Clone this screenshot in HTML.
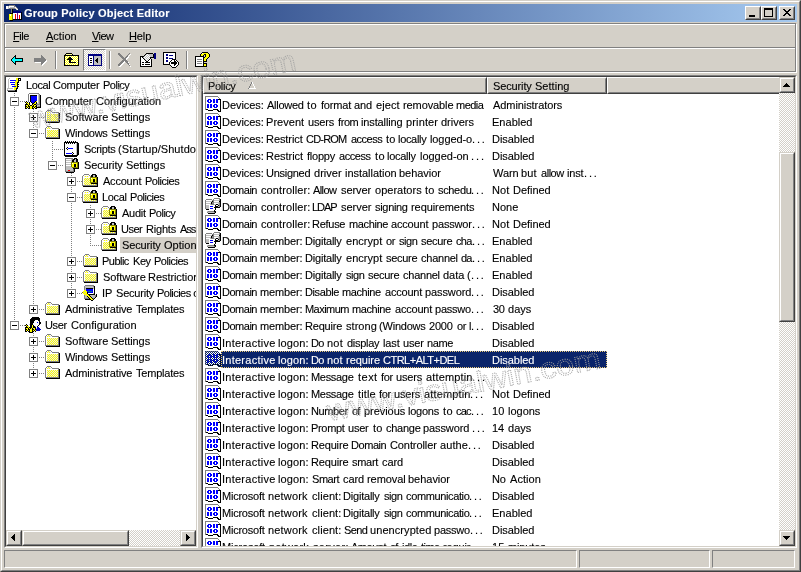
<!DOCTYPE html><html><head><meta charset="utf-8"><title>Group Policy Object Editor</title><style>
html,body{margin:0;padding:0;}
body{width:801px;height:572px;overflow:hidden;background:#d4d0c8;position:relative;
 font-family:"Liberation Sans",sans-serif;font-size:11px;color:#000;}
.a{position:absolute;}
.t{position:absolute;white-space:nowrap;line-height:13px;height:13px;will-change:transform;-webkit-text-stroke:0.12px currentColor;}
.sunk{position:absolute;box-sizing:border-box;border:1px solid;border-color:#808080 #fff #fff #808080;}
.sunk>.in{position:absolute;left:0;top:0;right:0;bottom:0;box-sizing:border-box;border:1px solid;border-color:#404040 #d4d0c8 #d4d0c8 #404040;background:#fff;overflow:hidden;}
.btn{position:absolute;box-sizing:border-box;background:#d4d0c8;border:1px solid;border-color:#fff #404040 #404040 #fff;}
.btn:before{content:"";position:absolute;left:0;top:0;right:0;bottom:0;border:1px solid;border-color:#d4d0c8 #808080 #808080 #d4d0c8;}
.sb{position:absolute;box-sizing:border-box;background:#d4d0c8;border:1px solid;border-color:#d4d0c8 #404040 #404040 #d4d0c8;}
.sb:before{content:"";position:absolute;left:0;top:0;right:0;bottom:0;border:1px solid;border-color:#fff #808080 #808080 #fff;}
.chk{position:absolute;background-color:#fff;background-image:
 linear-gradient(45deg,#d4d0c8 25%,transparent 25%,transparent 75%,#d4d0c8 75%),
 linear-gradient(45deg,#d4d0c8 25%,transparent 25%,transparent 75%,#d4d0c8 75%);
 background-size:2px 2px;background-position:0 0,1px 1px;}
.hdr{position:absolute;box-sizing:border-box;height:17px;background:#d4d0c8;border:1px solid;border-color:#fff #404040 #404040 #fff;}
.hdr:before{content:"";position:absolute;left:0;top:0;right:0;bottom:0;border:1px solid;border-color:#d4d0c8 #808080 #808080 #d4d0c8;}
.dotv{position:absolute;width:1px;background-image:linear-gradient(#808080 50%,transparent 50%);background-size:1px 2px;}
.doth{position:absolute;height:1px;background-image:linear-gradient(90deg,#808080 50%,transparent 50%);background-size:2px 1px;}
.pm{position:absolute;width:9px;height:9px;box-sizing:border-box;border:1px solid #808080;background:#fff;}
.pm i{position:absolute;left:1px;top:3px;width:5px;height:1px;background:#000;}
.pm b{position:absolute;left:3px;top:1px;width:1px;height:5px;background:#000;}
</style></head><body><svg width="0" height="0" style="position:absolute"><defs><symbol id="ic0" viewBox="0 0 16 16"><path fill="#808080" d="M0 0h13v1h-13zM0 1h1v1h-1zM13 1h1v1h-1zM0 2h1v1h-1zM14 2h1v1h-1zM0 3h1v1h-1zM0 4h1v1h-1zM0 5h1v1h-1zM0 6h1v1h-1zM0 7h1v1h-1zM0 8h1v1h-1zM0 9h1v1h-1zM0 10h1v1h-1zM0 11h1v1h-1zM0 12h1v1h-1zM0 13h1v1h-1z"/><path fill="#fff" d="M1 1h12v1h-12zM1 2h13v1h-13zM1 3h2v1h-2zM6 3h2v1h-2zM10 3h1v1h-1zM1 4h1v1h-1zM4 4h1v1h-1zM7 4h1v1h-1zM10 4h1v1h-1zM13 4h2v1h-2zM1 5h1v1h-1zM4 5h1v1h-1zM7 5h1v1h-1zM10 5h1v1h-1zM13 5h2v1h-2zM1 6h2v1h-2zM6 6h2v1h-2zM10 6h1v1h-1zM13 6h2v1h-2zM1 7h14v1h-14zM1 8h1v1h-1zM4 8h1v1h-1zM7 8h2v1h-2zM12 8h3v1h-3zM1 9h1v1h-1zM4 9h1v1h-1zM7 9h1v1h-1zM10 9h1v1h-1zM13 9h2v1h-2zM1 10h1v1h-1zM4 10h1v1h-1zM7 10h1v1h-1zM10 10h1v1h-1zM13 10h2v1h-2zM1 11h1v1h-1zM4 11h1v1h-1zM7 11h2v1h-2zM12 11h3v1h-3zM1 12h14v1h-14zM3 13h5v1h-5zM13 13h2v1h-2zM14 14h1v1h-1z"/><path fill="#0000ff" d="M3 3h3v1h-3zM8 3h2v1h-2zM11 3h2v1h-2zM2 4h2v1h-2zM5 4h2v1h-2zM8 4h2v1h-2zM11 4h2v1h-2zM2 5h2v1h-2zM5 5h2v1h-2zM8 5h2v1h-2zM11 5h2v1h-2zM3 6h3v1h-3zM8 6h2v1h-2zM11 6h2v1h-2zM2 8h2v1h-2zM5 8h2v1h-2zM9 8h3v1h-3zM2 9h2v1h-2zM5 9h2v1h-2zM8 9h2v1h-2zM11 9h2v1h-2zM2 10h2v1h-2zM5 10h2v1h-2zM8 10h2v1h-2zM11 10h2v1h-2zM2 11h2v1h-2zM5 11h2v1h-2zM9 11h3v1h-3z"/><path fill="#000" d="M13 3h3v1h-3zM15 4h1v1h-1zM15 5h1v1h-1zM15 6h1v1h-1zM15 7h1v1h-1zM15 8h1v1h-1zM15 9h1v1h-1zM15 10h1v1h-1zM15 11h1v1h-1zM15 12h1v1h-1zM1 13h2v1h-2zM8 13h5v1h-5zM15 13h1v1h-1zM3 14h5v1h-5zM12 14h2v1h-2zM15 14h1v1h-1zM13 15h3v1h-3z"/></symbol><symbol id="ic2" viewBox="0 0 16 16"><path fill="#0a246a" d="M0 0h1v1h-1zM2 0h1v1h-1zM4 0h1v1h-1zM6 0h1v1h-1zM8 0h1v1h-1zM10 0h1v1h-1zM12 0h1v1h-1zM1 1h1v1h-1zM3 1h1v1h-1zM5 1h1v1h-1zM7 1h1v1h-1zM9 1h1v1h-1zM11 1h1v1h-1zM13 1h1v1h-1zM0 2h1v1h-1zM2 2h1v1h-1zM4 2h1v1h-1zM6 2h1v1h-1zM8 2h1v1h-1zM10 2h1v1h-1zM12 2h1v1h-1zM14 2h1v1h-1zM1 3h1v1h-1zM3 3h1v1h-1zM5 3h1v1h-1zM7 3h1v1h-1zM9 3h1v1h-1zM11 3h1v1h-1zM13 3h1v1h-1zM15 3h1v1h-1zM0 4h1v1h-1zM2 4h1v1h-1zM4 4h1v1h-1zM6 4h1v1h-1zM8 4h1v1h-1zM10 4h1v1h-1zM12 4h1v1h-1zM14 4h1v1h-1zM1 5h1v1h-1zM3 5h1v1h-1zM5 5h1v1h-1zM7 5h1v1h-1zM9 5h1v1h-1zM11 5h1v1h-1zM13 5h1v1h-1zM15 5h1v1h-1zM0 6h1v1h-1zM2 6h1v1h-1zM4 6h1v1h-1zM6 6h1v1h-1zM8 6h1v1h-1zM10 6h1v1h-1zM12 6h1v1h-1zM14 6h1v1h-1zM1 7h1v1h-1zM3 7h1v1h-1zM5 7h1v1h-1zM7 7h1v1h-1zM9 7h1v1h-1zM11 7h1v1h-1zM13 7h1v1h-1zM15 7h1v1h-1zM0 8h1v1h-1zM2 8h1v1h-1zM4 8h1v1h-1zM6 8h1v1h-1zM8 8h1v1h-1zM10 8h1v1h-1zM12 8h1v1h-1zM14 8h1v1h-1zM1 9h1v1h-1zM3 9h1v1h-1zM5 9h1v1h-1zM7 9h1v1h-1zM9 9h1v1h-1zM11 9h1v1h-1zM13 9h1v1h-1zM15 9h1v1h-1zM0 10h1v1h-1zM2 10h1v1h-1zM4 10h1v1h-1zM6 10h1v1h-1zM8 10h1v1h-1zM10 10h1v1h-1zM12 10h1v1h-1zM14 10h1v1h-1zM1 11h1v1h-1zM3 11h1v1h-1zM5 11h1v1h-1zM7 11h1v1h-1zM9 11h1v1h-1zM11 11h1v1h-1zM13 11h1v1h-1zM15 11h1v1h-1zM0 12h1v1h-1zM2 12h1v1h-1zM4 12h1v1h-1zM6 12h1v1h-1zM8 12h1v1h-1zM10 12h1v1h-1zM12 12h1v1h-1zM14 12h1v1h-1zM1 13h1v1h-1zM3 13h1v1h-1zM5 13h1v1h-1zM7 13h1v1h-1zM9 13h1v1h-1zM11 13h1v1h-1zM13 13h1v1h-1zM15 13h1v1h-1zM4 14h1v1h-1zM6 14h1v1h-1zM12 14h1v1h-1zM14 14h1v1h-1zM13 15h1v1h-1zM15 15h1v1h-1z"/><path fill="#808080" d="M1 0h1v1h-1zM3 0h1v1h-1zM5 0h1v1h-1zM7 0h1v1h-1zM9 0h1v1h-1zM11 0h1v1h-1zM0 1h1v1h-1zM0 3h1v1h-1zM0 5h1v1h-1zM0 7h1v1h-1zM0 9h1v1h-1zM0 11h1v1h-1zM0 13h1v1h-1z"/><path fill="#fff" d="M2 1h1v1h-1zM4 1h1v1h-1zM6 1h1v1h-1zM8 1h1v1h-1zM10 1h1v1h-1zM12 1h1v1h-1zM1 2h1v1h-1zM3 2h1v1h-1zM5 2h1v1h-1zM7 2h1v1h-1zM9 2h1v1h-1zM11 2h1v1h-1zM13 2h1v1h-1zM2 3h1v1h-1zM6 3h1v1h-1zM10 3h1v1h-1zM1 4h1v1h-1zM7 4h1v1h-1zM13 4h1v1h-1zM4 5h1v1h-1zM10 5h1v1h-1zM14 5h1v1h-1zM1 6h1v1h-1zM7 6h1v1h-1zM13 6h1v1h-1zM2 7h1v1h-1zM4 7h1v1h-1zM6 7h1v1h-1zM8 7h1v1h-1zM10 7h1v1h-1zM12 7h1v1h-1zM14 7h1v1h-1zM1 8h1v1h-1zM7 8h1v1h-1zM13 8h1v1h-1zM4 9h1v1h-1zM10 9h1v1h-1zM14 9h1v1h-1zM1 10h1v1h-1zM7 10h1v1h-1zM13 10h1v1h-1zM4 11h1v1h-1zM8 11h1v1h-1zM12 11h1v1h-1zM14 11h1v1h-1zM1 12h1v1h-1zM3 12h1v1h-1zM5 12h1v1h-1zM7 12h1v1h-1zM9 12h1v1h-1zM11 12h1v1h-1zM13 12h1v1h-1zM4 13h1v1h-1zM6 13h1v1h-1zM14 13h1v1h-1z"/><path fill="#0000ff" d="M4 3h1v1h-1zM8 3h1v1h-1zM12 3h1v1h-1zM3 4h1v1h-1zM5 4h1v1h-1zM9 4h1v1h-1zM11 4h1v1h-1zM2 5h1v1h-1zM6 5h1v1h-1zM8 5h1v1h-1zM12 5h1v1h-1zM3 6h1v1h-1zM5 6h1v1h-1zM9 6h1v1h-1zM11 6h1v1h-1zM3 8h1v1h-1zM5 8h1v1h-1zM9 8h1v1h-1zM11 8h1v1h-1zM2 9h1v1h-1zM6 9h1v1h-1zM8 9h1v1h-1zM12 9h1v1h-1zM3 10h1v1h-1zM5 10h1v1h-1zM9 10h1v1h-1zM11 10h1v1h-1zM2 11h1v1h-1zM6 11h1v1h-1zM10 11h1v1h-1z"/><path fill="#000" d="M14 3h1v1h-1zM15 4h1v1h-1zM15 6h1v1h-1zM15 8h1v1h-1zM15 10h1v1h-1zM15 12h1v1h-1zM2 13h1v1h-1zM8 13h1v1h-1zM10 13h1v1h-1zM12 13h1v1h-1zM3 14h1v1h-1zM5 14h1v1h-1zM7 14h1v1h-1zM13 14h1v1h-1zM15 14h1v1h-1zM14 15h1v1h-1z"/></symbol><symbol id="ic1" viewBox="0 0 16 16"><path fill="#808080" d="M9 0h6v1h-6zM1 1h6v1h-6zM8 1h1v1h-1zM14 1h1v1h-1zM0 2h1v1h-1zM7 2h2v1h-2zM14 2h1v1h-1zM0 3h1v1h-1zM8 3h1v1h-1zM0 4h1v1h-1zM7 4h2v1h-2zM14 4h1v1h-1zM0 5h1v1h-1zM7 5h2v1h-2zM14 5h1v1h-1zM0 6h1v1h-1zM6 6h3v1h-3zM14 6h1v1h-1zM0 7h1v1h-1zM14 7h1v1h-1zM0 8h1v1h-1zM14 8h1v1h-1zM0 9h1v1h-1zM0 10h1v1h-1zM3 13h6v1h-6zM2 14h1v1h-1zM9 14h1v1h-1z"/><path fill="#fff" d="M9 1h5v1h-5zM1 2h6v1h-6zM9 3h5v1h-5zM1 4h5v1h-5zM9 5h4v1h-4zM1 6h4v1h-4zM4 7h6v1h-6zM11 7h2v1h-2zM4 8h1v1h-1zM8 8h2v1h-2zM4 9h5v1h-5zM4 10h1v1h-1zM8 10h2v1h-2zM4 11h6v1h-6zM4 12h5v1h-5z"/><path fill="#000" d="M15 1h1v1h-1zM15 2h1v1h-1zM7 3h1v1h-1zM14 3h2v1h-2zM6 4h1v1h-1zM15 4h1v1h-1zM6 5h1v1h-1zM15 5h1v1h-1zM11 6h2v1h-2zM15 6h1v1h-1zM10 7h1v1h-1zM13 7h1v1h-1zM15 7h1v1h-1zM10 8h3v1h-3zM15 8h1v1h-1zM9 9h6v1h-6zM10 10h1v1h-1zM1 11h3v1h-3zM10 11h1v1h-1zM9 12h1v1h-1zM9 13h2v1h-2zM10 14h1v1h-1zM3 15h7v1h-7z"/><path fill="#c0c0c0" d="M9 2h5v1h-5zM1 3h6v1h-6zM9 4h5v1h-5zM1 5h5v1h-5zM13 5h1v1h-1zM5 6h1v1h-1zM9 6h2v1h-2zM13 6h1v1h-1zM1 7h3v1h-3zM1 8h3v1h-3zM13 8h1v1h-1zM1 9h3v1h-3zM1 10h3v1h-3zM2 13h1v1h-1zM3 14h6v1h-6z"/><path fill="#0000ff" d="M5 8h3v1h-3zM5 10h3v1h-3z"/></symbol><symbol id="folder" viewBox="0 0 16 16"><path fill="#808080" d="M3 1h4v1h-4zM2 2h1v1h-1zM7 2h1v1h-1zM1 3h1v1h-1zM8 3h7v1h-7zM1 4h1v1h-1zM14 4h1v1h-1zM1 5h1v1h-1zM14 5h1v1h-1zM1 6h1v1h-1zM14 6h1v1h-1zM1 7h1v1h-1zM14 7h1v1h-1zM1 8h1v1h-1zM14 8h1v1h-1zM1 9h1v1h-1zM14 9h1v1h-1zM1 10h1v1h-1zM14 10h1v1h-1zM1 11h1v1h-1zM14 11h1v1h-1zM1 12h14v1h-14z"/><path fill="#fff" d="M3 2h1v1h-1zM6 2h1v1h-1zM2 3h1v1h-1zM7 3h1v1h-1zM2 4h12v1h-12zM2 5h1v1h-1zM2 6h1v1h-1zM2 7h1v1h-1zM2 8h1v1h-1zM2 9h1v1h-1zM2 10h1v1h-1zM2 11h1v1h-1z"/><path fill="#ffff00" d="M4 2h1v1h-1zM3 3h1v1h-1zM5 3h1v1h-1zM3 5h1v1h-1zM5 5h1v1h-1zM7 5h1v1h-1zM9 5h1v1h-1zM11 5h1v1h-1zM13 5h1v1h-1zM4 6h1v1h-1zM6 6h1v1h-1zM8 6h1v1h-1zM10 6h1v1h-1zM12 6h1v1h-1zM3 7h1v1h-1zM5 7h1v1h-1zM7 7h1v1h-1zM9 7h1v1h-1zM11 7h1v1h-1zM13 7h1v1h-1zM4 8h1v1h-1zM6 8h1v1h-1zM8 8h1v1h-1zM10 8h1v1h-1zM12 8h1v1h-1zM3 9h1v1h-1zM5 9h1v1h-1zM7 9h1v1h-1zM9 9h1v1h-1zM11 9h1v1h-1zM13 9h1v1h-1zM4 10h1v1h-1zM6 10h1v1h-1zM8 10h1v1h-1zM10 10h1v1h-1zM12 10h1v1h-1zM3 11h1v1h-1zM5 11h1v1h-1zM7 11h1v1h-1zM9 11h1v1h-1zM11 11h1v1h-1zM13 11h1v1h-1z"/><path fill="#e8e8e8" d="M5 2h1v1h-1zM4 3h1v1h-1zM6 3h1v1h-1zM4 5h1v1h-1zM6 5h1v1h-1zM8 5h1v1h-1zM10 5h1v1h-1zM12 5h1v1h-1zM3 6h1v1h-1zM5 6h1v1h-1zM7 6h1v1h-1zM9 6h1v1h-1zM11 6h1v1h-1zM13 6h1v1h-1zM4 7h1v1h-1zM6 7h1v1h-1zM8 7h1v1h-1zM10 7h1v1h-1zM12 7h1v1h-1zM3 8h1v1h-1zM5 8h1v1h-1zM7 8h1v1h-1zM9 8h1v1h-1zM11 8h1v1h-1zM13 8h1v1h-1zM4 9h1v1h-1zM6 9h1v1h-1zM8 9h1v1h-1zM10 9h1v1h-1zM12 9h1v1h-1zM3 10h1v1h-1zM5 10h1v1h-1zM7 10h1v1h-1zM9 10h1v1h-1zM11 10h1v1h-1zM13 10h1v1h-1zM4 11h1v1h-1zM6 11h1v1h-1zM8 11h1v1h-1zM10 11h1v1h-1zM12 11h1v1h-1z"/><path fill="#000" d="M15 4h1v1h-1zM15 5h1v1h-1zM15 6h1v1h-1zM15 7h1v1h-1zM15 8h1v1h-1zM15 9h1v1h-1zM15 10h1v1h-1zM15 11h1v1h-1zM15 12h1v1h-1zM2 13h14v1h-14z"/></symbol><symbol id="lockf" viewBox="0 0 16 16"><path fill="#808080" d="M2 1h5v1h-5zM1 2h1v1h-1zM7 2h1v1h-1zM0 3h1v1h-1zM8 3h1v1h-1zM0 4h1v1h-1zM0 5h1v1h-1zM0 6h1v1h-1zM0 7h1v1h-1zM0 8h1v1h-1zM0 9h1v1h-1zM0 10h1v1h-1zM0 11h1v1h-1zM14 11h1v1h-1zM0 12h15v1h-15z"/><path fill="#000" d="M10 1h4v1h-4zM9 2h2v1h-2zM13 2h2v1h-2zM9 3h2v1h-2zM13 3h2v1h-2zM15 4h1v1h-1zM15 5h1v1h-1zM11 6h2v1h-2zM15 6h1v1h-1zM11 7h2v1h-2zM15 7h1v1h-1zM11 8h2v1h-2zM15 8h1v1h-1zM15 9h1v1h-1zM9 10h7v1h-7zM15 11h1v1h-1zM15 12h1v1h-1zM1 13h15v1h-15z"/><path fill="#fff" d="M2 2h5v1h-5zM1 3h1v1h-1zM7 3h1v1h-1zM1 4h7v1h-7zM1 5h1v1h-1zM9 5h1v1h-1zM1 6h1v1h-1zM1 7h1v1h-1zM1 8h1v1h-1zM1 9h1v1h-1zM1 10h1v1h-1zM1 11h1v1h-1z"/><path fill="#c0c0c0" d="M11 2h2v1h-2zM11 3h2v1h-2z"/><path fill="#e8e8e8" d="M2 3h1v1h-1zM4 3h1v1h-1zM6 3h1v1h-1zM2 5h1v1h-1zM4 5h1v1h-1zM6 5h1v1h-1zM3 6h1v1h-1zM5 6h1v1h-1zM7 6h1v1h-1zM2 7h1v1h-1zM4 7h1v1h-1zM6 7h1v1h-1zM3 8h1v1h-1zM5 8h1v1h-1zM7 8h1v1h-1zM2 9h1v1h-1zM4 9h1v1h-1zM6 9h1v1h-1zM3 10h1v1h-1zM5 10h1v1h-1zM7 10h1v1h-1zM2 11h1v1h-1zM4 11h1v1h-1zM6 11h1v1h-1zM8 11h1v1h-1zM10 11h1v1h-1zM12 11h1v1h-1z"/><path fill="#ffff00" d="M3 3h1v1h-1zM5 3h1v1h-1zM3 5h1v1h-1zM5 5h1v1h-1zM7 5h1v1h-1zM10 5h4v1h-4zM2 6h1v1h-1zM4 6h1v1h-1zM6 6h1v1h-1zM9 6h2v1h-2zM13 6h1v1h-1zM3 7h1v1h-1zM5 7h1v1h-1zM7 7h1v1h-1zM9 7h2v1h-2zM13 7h1v1h-1zM2 8h1v1h-1zM4 8h1v1h-1zM6 8h1v1h-1zM9 8h2v1h-2zM13 8h1v1h-1zM3 9h1v1h-1zM5 9h1v1h-1zM7 9h1v1h-1zM2 10h1v1h-1zM4 10h1v1h-1zM6 10h1v1h-1zM8 10h1v1h-1zM3 11h1v1h-1zM5 11h1v1h-1zM7 11h1v1h-1zM9 11h1v1h-1zM11 11h1v1h-1zM13 11h1v1h-1z"/><path fill="#808000" d="M8 4h7v1h-7zM8 5h1v1h-1zM14 5h1v1h-1zM8 6h1v1h-1zM14 6h1v1h-1zM8 7h1v1h-1zM14 7h1v1h-1zM8 8h1v1h-1zM14 8h1v1h-1zM8 9h7v1h-7z"/></symbol><symbol id="scroll" viewBox="0 0 16 16"><path fill="#c0c0c0" d="M3 1h1v1h-1zM2 2h1v1h-1zM2 3h1v1h-1zM2 4h1v1h-1zM2 5h1v1h-1zM2 6h1v1h-1zM2 7h1v1h-1zM2 8h1v1h-1zM2 9h1v1h-1zM2 10h1v1h-1zM1 11h6v1h-6zM1 12h1v1h-1z"/><path fill="#fff" d="M4 1h6v1h-6zM3 2h7v1h-7zM13 2h1v1h-1zM3 3h1v1h-1zM3 4h6v1h-6zM3 5h1v1h-1zM3 6h6v1h-6zM3 7h2v1h-2zM3 8h5v1h-5zM3 9h3v1h-3zM3 10h5v1h-5zM7 11h1v1h-1zM2 12h6v1h-6z"/><path fill="#ffff00" d="M10 1h2v1h-2zM10 2h2v1h-2zM10 3h2v1h-2zM9 4h3v1h-3zM9 5h2v1h-2zM9 6h2v1h-2zM9 7h2v1h-2zM8 8h3v1h-3zM10 9h1v1h-1zM8 10h3v1h-3zM8 11h2v1h-2zM8 12h2v1h-2z"/><path fill="#000" d="M12 1h3v1h-3zM12 2h1v1h-1zM14 2h1v1h-1zM12 3h3v1h-3zM12 4h1v1h-1zM11 5h2v1h-2zM11 6h1v1h-1zM11 7h2v1h-2zM11 8h1v1h-1zM11 9h2v1h-2zM11 10h1v1h-1zM10 11h2v1h-2zM10 12h1v1h-1zM9 13h2v1h-2zM2 14h9v1h-9z"/><path fill="#0000ff" d="M4 3h6v1h-6zM4 5h5v1h-5zM5 7h4v1h-4zM6 9h4v1h-4z"/><path fill="#808080" d="M1 13h8v1h-8z"/></symbol><symbol id="comp" viewBox="0 0 16 16"><path fill="#808080" d="M4 0h10v1h-10zM3 1h1v1h-1zM14 1h1v1h-1zM3 2h1v1h-1zM14 2h1v1h-1zM3 3h1v1h-1zM14 3h1v1h-1zM3 4h1v1h-1zM14 4h1v1h-1zM3 5h1v1h-1zM14 5h1v1h-1zM3 6h1v1h-1zM14 6h1v1h-1zM3 7h1v1h-1zM14 7h1v1h-1zM3 8h1v1h-1zM14 8h1v1h-1zM14 9h1v1h-1zM14 10h1v1h-1zM11 11h4v1h-4zM13 13h2v1h-2z"/><path fill="#fff" d="M4 1h9v1h-9zM4 2h1v1h-1zM12 2h1v1h-1zM4 3h1v1h-1zM12 3h1v1h-1zM4 4h1v1h-1zM12 4h1v1h-1zM4 5h1v1h-1zM12 5h1v1h-1zM4 6h1v1h-1zM12 6h1v1h-1zM4 7h1v1h-1zM12 7h1v1h-1zM4 8h1v1h-1zM12 8h1v1h-1zM5 9h1v1h-1zM12 9h1v1h-1zM5 10h2v1h-2zM5 11h2v1h-2z"/><path fill="#c0c0c0" d="M13 1h1v1h-1zM13 2h1v1h-1zM13 3h1v1h-1zM13 4h1v1h-1zM13 5h1v1h-1zM13 6h1v1h-1zM13 7h1v1h-1zM13 8h1v1h-1zM13 9h1v1h-1zM12 10h2v1h-2zM12 12h3v1h-3zM12 13h1v1h-1z"/><path fill="#000" d="M5 2h7v1h-7zM15 2h1v1h-1zM5 3h1v1h-1zM15 3h1v1h-1zM5 4h1v1h-1zM15 4h1v1h-1zM5 5h1v1h-1zM15 5h1v1h-1zM5 6h1v1h-1zM15 6h1v1h-1zM5 7h1v1h-1zM15 7h1v1h-1zM1 8h1v1h-1zM5 8h1v1h-1zM10 8h1v1h-1zM15 8h1v1h-1zM0 9h1v1h-1zM2 9h1v1h-1zM4 9h1v1h-1zM6 9h1v1h-1zM9 9h1v1h-1zM11 9h1v1h-1zM15 9h1v1h-1zM1 10h1v1h-1zM4 10h1v1h-1zM7 10h2v1h-2zM11 10h1v1h-1zM15 10h1v1h-1zM0 11h3v1h-3zM4 11h1v1h-1zM7 11h1v1h-1zM9 11h2v1h-2zM15 11h1v1h-1zM0 12h1v1h-1zM3 12h1v1h-1zM5 12h2v1h-2zM8 12h1v1h-1zM11 12h1v1h-1zM15 12h1v1h-1zM0 13h2v1h-2zM3 13h2v1h-2zM7 13h2v1h-2zM10 13h2v1h-2zM15 13h1v1h-1zM0 14h1v1h-1zM2 14h1v1h-1zM4 14h1v1h-1zM7 14h1v1h-1zM9 14h1v1h-1zM11 14h5v1h-5zM0 15h2v1h-2zM3 15h2v1h-2zM7 15h2v1h-2zM10 15h2v1h-2z"/><path fill="#0000ff" d="M6 3h6v1h-6zM6 4h6v1h-6zM6 5h6v1h-6zM6 6h6v1h-6zM6 7h6v1h-6zM6 8h4v1h-4zM7 9h2v1h-2z"/><path fill="#ffff00" d="M11 8h1v1h-1zM1 9h1v1h-1zM10 9h1v1h-1zM2 10h2v1h-2zM9 10h2v1h-2zM3 11h1v1h-1zM8 11h1v1h-1zM1 12h2v1h-2zM4 12h1v1h-1zM7 12h1v1h-1zM9 12h2v1h-2zM2 13h1v1h-1zM5 13h2v1h-2zM9 13h1v1h-1zM1 14h1v1h-1zM3 14h1v1h-1zM5 14h2v1h-2zM8 14h1v1h-1zM10 14h1v1h-1zM5 15h2v1h-2z"/></symbol><symbol id="user" viewBox="0 0 16 16"><path fill="#000" d="M7 0h7v1h-7zM6 1h9v1h-9zM5 2h10v1h-10zM5 3h5v1h-5zM13 3h2v1h-2zM5 4h4v1h-4zM14 4h1v1h-1zM5 5h4v1h-4zM14 5h2v1h-2zM5 6h3v1h-3zM14 6h2v1h-2zM1 7h1v1h-1zM5 7h3v1h-3zM14 7h1v1h-1zM0 8h1v1h-1zM2 8h1v1h-1zM5 8h2v1h-2zM8 8h1v1h-1zM13 8h1v1h-1zM1 9h1v1h-1zM5 9h2v1h-2zM8 9h2v1h-2zM12 9h1v1h-1zM0 10h3v1h-3zM4 10h3v1h-3zM8 10h3v1h-3zM0 11h1v1h-1zM3 11h1v1h-1zM5 11h1v1h-1zM7 11h1v1h-1zM10 11h1v1h-1zM0 12h2v1h-2zM3 12h2v1h-2zM7 12h2v1h-2zM10 12h1v1h-1zM0 13h1v1h-1zM2 13h1v1h-1zM4 13h1v1h-1zM7 13h1v1h-1zM9 13h1v1h-1zM0 14h2v1h-2zM3 14h2v1h-2zM7 14h2v1h-2zM10 14h1v1h-1zM4 15h4v1h-4z"/><path fill="#fff" d="M10 3h3v1h-3zM9 4h5v1h-5zM9 5h3v1h-3zM13 5h1v1h-1zM8 6h6v1h-6zM8 7h6v1h-6zM4 8h1v1h-1zM9 8h4v1h-4zM4 9h1v1h-1zM11 9h1v1h-1zM11 10h1v1h-1z"/><path fill="#0000ff" d="M12 5h1v1h-1z"/><path fill="#c0c0c0" d="M4 7h1v1h-1zM10 9h1v1h-1zM11 11h1v1h-1z"/><path fill="#ffff00" d="M1 8h1v1h-1zM7 8h1v1h-1zM2 9h2v1h-2zM7 9h1v1h-1zM3 10h1v1h-1zM7 10h1v1h-1zM1 11h2v1h-2zM4 11h1v1h-1zM6 11h1v1h-1zM8 11h2v1h-2zM2 12h1v1h-1zM5 12h2v1h-2zM9 12h1v1h-1zM1 13h1v1h-1zM3 13h1v1h-1zM5 13h2v1h-2zM8 13h1v1h-1zM10 13h1v1h-1zM5 14h2v1h-2z"/><path fill="#0000c0" d="M12 10h2v1h-2zM12 11h3v1h-3zM11 12h5v1h-5zM11 13h4v1h-4z"/></symbol><symbol id="script" viewBox="0 0 16 16"><path fill="#000" d="M2 0h1v1h-1zM4 0h1v1h-1zM6 0h1v1h-1zM8 0h1v1h-1zM10 0h1v1h-1zM12 0h1v1h-1zM1 1h14v1h-14zM1 2h1v1h-1zM3 2h1v1h-1zM5 2h1v1h-1zM7 2h1v1h-1zM9 2h1v1h-1zM11 2h1v1h-1zM14 2h2v1h-2zM1 3h1v1h-1zM14 3h2v1h-2zM1 4h1v1h-1zM14 4h2v1h-2zM1 5h1v1h-1zM14 5h2v1h-2zM1 6h1v1h-1zM4 6h1v1h-1zM14 6h2v1h-2zM1 7h1v1h-1zM3 7h1v1h-1zM14 7h2v1h-2zM1 8h1v1h-1zM4 8h1v1h-1zM14 8h2v1h-2zM1 9h1v1h-1zM14 9h2v1h-2zM1 10h1v1h-1zM14 10h2v1h-2zM1 11h1v1h-1zM9 11h1v1h-1zM14 11h2v1h-2zM1 12h1v1h-1zM10 12h1v1h-1zM14 12h2v1h-2zM1 13h1v1h-1zM9 13h1v1h-1zM14 13h2v1h-2zM1 14h14v1h-14zM2 15h12v1h-12z"/><path fill="#fff" d="M2 2h1v1h-1zM4 2h1v1h-1zM6 2h1v1h-1zM8 2h1v1h-1zM10 2h1v1h-1zM12 2h1v1h-1zM2 3h11v1h-11zM2 4h11v1h-11zM2 5h11v1h-11zM2 6h2v1h-2zM5 6h8v1h-8zM2 7h1v1h-1zM4 7h1v1h-1zM10 7h3v1h-3zM2 8h2v1h-2zM5 8h8v1h-8zM2 9h11v1h-11zM2 10h11v1h-11zM2 11h7v1h-7zM10 11h3v1h-3zM2 12h1v1h-1zM9 12h1v1h-1zM11 12h2v1h-2zM2 13h7v1h-7zM10 13h3v1h-3z"/><path fill="#c0c0c0" d="M13 2h1v1h-1zM13 3h1v1h-1zM13 4h1v1h-1zM13 5h1v1h-1zM13 6h1v1h-1zM13 7h1v1h-1zM13 8h1v1h-1zM13 9h1v1h-1zM13 10h1v1h-1zM13 11h1v1h-1zM13 12h1v1h-1zM13 13h1v1h-1z"/><path fill="#0000ff" d="M5 7h5v1h-5zM3 12h6v1h-6z"/></symbol><symbol id="secsrv" viewBox="0 0 16 16"><path fill="#808080" d="M2 1h8v1h-8zM2 2h1v1h-1zM9 2h1v1h-1zM2 3h1v1h-1zM2 4h1v1h-1zM2 5h1v1h-1zM2 6h1v1h-1zM2 7h1v1h-1zM2 8h1v1h-1zM2 9h1v1h-1zM2 10h1v1h-1zM2 11h1v1h-1zM2 12h1v1h-1zM10 12h1v1h-1zM2 13h1v1h-1zM10 13h1v1h-1zM2 14h9v1h-9z"/><path fill="#000" d="M11 1h3v1h-3zM10 2h2v1h-2zM13 2h2v1h-2zM9 3h2v1h-2zM13 3h2v1h-2zM9 4h2v1h-2zM13 4h2v1h-2zM15 5h1v1h-1zM15 6h1v1h-1zM11 7h2v1h-2zM15 7h1v1h-1zM11 8h2v1h-2zM15 8h1v1h-1zM11 9h2v1h-2zM15 9h1v1h-1zM15 10h1v1h-1zM10 11h6v1h-6zM11 12h1v1h-1zM11 13h1v1h-1zM11 14h1v1h-1zM3 15h8v1h-8z"/><path fill="#fff" d="M3 2h5v1h-5zM3 4h5v1h-5zM3 6h5v1h-5zM9 6h1v1h-1zM3 8h5v1h-5z"/><path fill="#c0c0c0" d="M8 2h1v1h-1zM12 2h1v1h-1zM3 3h6v1h-6zM11 3h2v1h-2zM8 4h1v1h-1zM11 4h2v1h-2zM3 5h5v1h-5zM3 7h5v1h-5zM3 9h5v1h-5zM3 10h6v1h-6zM3 11h7v1h-7zM3 12h7v1h-7zM3 13h2v1h-2zM7 13h3v1h-3z"/><path fill="#808000" d="M8 5h7v1h-7zM8 6h1v1h-1zM14 6h1v1h-1zM8 7h1v1h-1zM14 7h1v1h-1zM8 8h1v1h-1zM14 8h1v1h-1zM8 9h1v1h-1zM14 9h1v1h-1zM9 10h6v1h-6z"/><path fill="#ffff00" d="M10 6h4v1h-4zM9 7h2v1h-2zM13 7h1v1h-1zM9 8h2v1h-2zM13 8h1v1h-1zM9 9h2v1h-2zM13 9h1v1h-1z"/><path fill="#ff0000" d="M5 13h2v1h-2z"/></symbol><symbol id="ipsec" viewBox="0 0 16 16"><path fill="#808080" d="M3 0h9v1h-9zM2 1h1v1h-1zM11 1h1v1h-1zM2 2h1v1h-1zM2 3h1v1h-1zM2 4h1v1h-1zM2 10h1v1h-1zM13 10h1v1h-1zM2 11h1v1h-1zM13 11h1v1h-1zM2 12h1v1h-1zM2 13h5v1h-5zM11 13h1v1h-1z"/><path fill="#c0c0c0" d="M3 1h8v1h-8zM3 2h9v1h-9zM3 3h1v1h-1zM11 3h1v1h-1zM3 4h1v1h-1zM2 7h1v1h-1zM11 8h1v1h-1zM3 10h1v1h-1zM8 10h5v1h-5zM3 11h2v1h-2zM9 11h4v1h-4zM3 12h3v1h-3zM10 12h3v1h-3z"/><path fill="#000" d="M12 1h1v1h-1zM12 2h1v1h-1zM4 3h7v1h-7zM12 3h1v1h-1zM12 4h1v1h-1zM12 5h1v1h-1zM12 6h1v1h-1zM5 7h1v1h-1zM12 7h1v1h-1zM5 8h1v1h-1zM12 8h1v1h-1zM6 9h7v1h-7zM14 9h1v1h-1zM7 10h1v1h-1zM14 10h1v1h-1zM5 11h1v1h-1zM8 11h1v1h-1zM14 11h1v1h-1zM6 12h1v1h-1zM9 12h1v1h-1zM13 12h1v1h-1zM7 13h1v1h-1zM10 13h1v1h-1zM12 13h1v1h-1zM3 14h6v1h-6zM11 14h1v1h-1zM9 15h2v1h-2z"/><path fill="#0000ff" d="M4 4h7v1h-7zM4 5h7v1h-7zM5 6h1v1h-1zM10 6h1v1h-1zM6 7h5v1h-5z"/><path fill="#fff" d="M11 4h1v1h-1zM11 5h1v1h-1zM11 6h1v1h-1zM11 7h1v1h-1zM6 8h5v1h-5z"/><path fill="#ffff00" d="M2 5h2v1h-2zM1 6h4v1h-4zM1 7h1v1h-1zM3 7h2v1h-2zM1 8h4v1h-4zM2 9h4v1h-4zM4 10h3v1h-3zM6 11h2v1h-2zM7 12h2v1h-2zM8 13h2v1h-2zM9 14h2v1h-2z"/><path fill="#008080" d="M6 6h4v1h-4z"/><path fill="#808000" d="M0 7h1v1h-1z"/></symbol><symbol id="titleic" viewBox="0 0 16 16"><path fill="#808080" d="M3 0h6v1h-6zM8 1h2v1h-2zM10 2h1v1h-1zM3 3h6v1h-6zM11 3h1v1h-1zM5 4h1v1h-1zM5 5h1v1h-1zM5 6h1v1h-1zM5 7h1v1h-1z"/><path fill="#fff" d="M0 1h2v1h-2zM3 1h5v1h-5zM0 2h2v1h-2zM3 2h1v1h-1zM9 2h1v1h-1zM0 3h2v1h-2zM10 3h1v1h-1zM11 4h1v1h-1zM7 8h4v1h-4zM12 8h3v1h-3zM4 9h1v1h-1zM7 9h2v1h-2zM10 9h1v1h-1zM12 9h3v1h-3zM4 10h1v1h-1zM7 10h2v1h-2zM10 10h1v1h-1zM12 10h1v1h-1zM14 10h1v1h-1zM7 11h2v1h-2zM10 11h1v1h-1zM12 11h1v1h-1zM14 11h1v1h-1zM7 12h2v1h-2zM10 12h1v1h-1zM12 12h1v1h-1zM14 12h1v1h-1zM7 13h2v1h-2zM10 13h1v1h-1zM12 13h1v1h-1zM14 13h1v1h-1z"/><path fill="#c0c0c0" d="M2 1h1v1h-1zM2 2h1v1h-1zM4 2h5v1h-5zM2 3h1v1h-1zM9 3h1v1h-1zM10 4h1v1h-1z"/><path fill="#000" d="M6 4h1v1h-1zM6 5h1v1h-1zM6 6h1v1h-1zM6 7h1v1h-1zM15 7h1v1h-1zM4 8h3v1h-3zM15 8h1v1h-1zM15 9h1v1h-1zM15 10h1v1h-1zM15 11h1v1h-1zM15 12h1v1h-1zM15 13h1v1h-1zM7 14h9v1h-9zM4 15h3v1h-3z"/><path fill="#000080" d="M7 6h8v1h-8zM7 7h8v1h-8z"/><path fill="#800080" d="M11 8h1v1h-1zM11 9h1v1h-1zM11 10h1v1h-1zM11 11h1v1h-1zM11 12h1v1h-1zM11 13h1v1h-1z"/><path fill="#ffff00" d="M3 9h1v1h-1zM5 9h1v1h-1zM3 10h1v1h-1zM5 10h1v1h-1zM3 11h3v1h-3zM3 12h3v1h-3zM3 13h3v1h-3zM3 14h3v1h-3z"/><path fill="#808000" d="M6 9h1v1h-1zM6 10h1v1h-1zM6 11h1v1h-1zM6 12h1v1h-1zM6 13h1v1h-1zM6 14h1v1h-1z"/><path fill="#ff0000" d="M9 9h1v1h-1zM9 10h1v1h-1zM13 10h1v1h-1zM9 11h1v1h-1zM13 11h1v1h-1zM9 12h1v1h-1zM13 12h1v1h-1zM9 13h1v1h-1zM13 13h1v1h-1z"/></symbol></defs></svg>
<div class="a" style="left:0;top:0;width:801px;height:572px;box-sizing:border-box;border:1px solid;border-color:#d4d0c8 #404040 #404040 #d4d0c8;"></div>
<div class="a" style="left:1px;top:1px;width:799px;height:570px;box-sizing:border-box;border:1px solid;border-color:#fff #808080 #808080 #fff;"></div>
<div class="a" style="left:4px;top:4px;width:793px;height:18px;background:linear-gradient(90deg,#0a246a,#a6caf0);"></div>
<div class="t" id="title" style="left:23.66px;top:7px;letter-spacing:0.197px;color:#fff;font-weight:bold;">Group Policy Object Editor</div>
<svg class="a" style="left:6px;top:5px" width="16" height="16" shape-rendering="crispEdges"><use href="#titleic"/></svg>
<div class="btn" style="left:745px;top:6px;width:16px;height:14px;"></div>
<div class="btn" style="left:761px;top:6px;width:16px;height:14px;"></div>
<div class="btn" style="left:779px;top:6px;width:16px;height:14px;"></div>
<div class="a" style="left:749px;top:15px;width:6px;height:2px;background:#000"></div>
<div class="a" style="left:764px;top:8px;width:9px;height:9px;box-sizing:border-box;border:1px solid #000;border-top-width:2px"></div>
<svg class="a" style="left:783px;top:9px" width="8" height="7" viewBox="0 0 8 7" shape-rendering="crispEdges"><path d="M0 0h2v1h-2zM6 0h2v1h-2zM1 1h2v1h-2zM5 1h2v1h-2zM2 2h4v1h-4zM3 3h2v1h-2zM2 4h4v1h-4zM1 5h2v1h-2zM5 5h2v1h-2zM0 6h2v1h-2zM6 6h2v1h-2z" fill="#000"/></svg>
<div class="t" id="m1" style="left:13.14px;top:30px;letter-spacing:-0.473px;"><u>F</u>ile</div>
<div class="t" id="m2" style="left:46.00px;top:30px;letter-spacing:0.009px;"><u>A</u>ction</div>
<div class="t" id="m3" style="left:92.00px;top:30px;letter-spacing:-0.593px;"><u>V</u>iew</div>
<div class="t" id="m4" style="left:129.14px;top:30px;letter-spacing:-0.106px;"><u>H</u>elp</div>
<div class="a" style="left:5px;top:24px;width:792px;height:49px;box-sizing:border-box;border:1px solid #fff"></div>
<div class="a" style="left:4px;top:23px;width:792px;height:49px;box-sizing:border-box;border:1px solid #808080"></div>
<div class="a" style="left:5px;top:47px;width:790px;height:1px;background:#808080"></div>
<div class="a" style="left:5px;top:48px;width:790px;height:1px;background:#fff"></div>
<svg class="a" style="left:11px;top:55px" width="12" height="10" viewBox="0 0 12 10" shape-rendering="crispEdges"><path fill="#000" d="M4 0h1v1h-1zM3 1h2v1h-2zM2 2h1v1h-1zM4 2h1v1h-1zM1 3h1v1h-1zM4 3h8v1h-8zM0 4h1v1h-1zM11 4h1v1h-1zM0 5h1v1h-1zM11 5h1v1h-1zM1 6h1v1h-1zM4 6h8v1h-8zM2 7h1v1h-1zM4 7h1v1h-1zM3 8h2v1h-2zM4 9h1v1h-1z"/><path fill="#00ffff" d="M3 2h1v1h-1zM2 3h2v1h-2zM1 4h10v1h-10zM1 5h10v1h-10zM2 6h2v1h-2zM3 7h1v1h-1z"/></svg>
<svg class="a" style="left:34px;top:55px" width="13" height="11" viewBox="0 0 13 11" shape-rendering="crispEdges"><path fill="#808080" d="M7 0h1v1h-1zM7 1h2v1h-2zM7 2h3v1h-3zM0 3h11v1h-11zM0 4h12v1h-12zM0 5h12v1h-12zM0 6h11v1h-11zM7 7h3v1h-3zM7 8h2v1h-2zM7 9h1v1h-1z"/><path fill="#fff" d="M12 5h1v1h-1zM11 6h2v1h-2zM1 7h6v1h-6zM10 7h2v1h-2zM9 8h2v1h-2zM8 9h2v1h-2zM8 10h1v1h-1z"/></svg>
<div class="a" style="left:55px;top:51px;width:1px;height:18px;background:#808080"></div><div class="a" style="left:56px;top:51px;width:1px;height:18px;background:#fff"></div>
<div class="a" style="left:109px;top:51px;width:1px;height:18px;background:#808080"></div><div class="a" style="left:110px;top:51px;width:1px;height:18px;background:#fff"></div>
<div class="a" style="left:186px;top:51px;width:1px;height:18px;background:#808080"></div><div class="a" style="left:187px;top:51px;width:1px;height:18px;background:#fff"></div>
<svg class="a" style="left:64px;top:53px" width="15" height="13" viewBox="0 0 15 13" shape-rendering="crispEdges"><path fill="#000" d="M2 0h6v1h-6zM1 1h1v1h-1zM8 1h1v1h-1zM0 2h15v1h-15zM0 3h1v1h-1zM14 3h1v1h-1zM0 4h1v1h-1zM5 4h2v1h-2zM14 4h1v1h-1zM0 5h1v1h-1zM4 5h4v1h-4zM14 5h1v1h-1zM0 6h1v1h-1zM3 6h6v1h-6zM14 6h1v1h-1zM0 7h1v1h-1zM5 7h2v1h-2zM14 7h1v1h-1zM0 8h1v1h-1zM5 8h2v1h-2zM14 8h1v1h-1zM0 9h1v1h-1zM5 9h7v1h-7zM14 9h1v1h-1zM0 10h1v1h-1zM14 10h1v1h-1zM0 11h1v1h-1zM14 11h1v1h-1zM0 12h15v1h-15z"/><path fill="#ffff99" d="M2 1h6v1h-6z"/><path fill="#ffff00" d="M1 3h1v1h-1zM3 3h1v1h-1zM5 3h1v1h-1zM7 3h1v1h-1zM9 3h1v1h-1zM11 3h1v1h-1zM13 3h1v1h-1zM2 4h1v1h-1zM4 4h1v1h-1zM8 4h1v1h-1zM10 4h1v1h-1zM12 4h1v1h-1zM1 5h1v1h-1zM3 5h1v1h-1zM9 5h1v1h-1zM11 5h1v1h-1zM13 5h1v1h-1zM2 6h1v1h-1zM10 6h1v1h-1zM12 6h1v1h-1zM1 7h1v1h-1zM3 7h1v1h-1zM7 7h1v1h-1zM9 7h1v1h-1zM11 7h1v1h-1zM13 7h1v1h-1zM2 8h1v1h-1zM4 8h1v1h-1zM8 8h1v1h-1zM10 8h1v1h-1zM12 8h1v1h-1zM1 9h1v1h-1zM3 9h1v1h-1zM13 9h1v1h-1zM2 10h1v1h-1zM4 10h1v1h-1zM6 10h1v1h-1zM8 10h1v1h-1zM10 10h1v1h-1zM12 10h1v1h-1zM1 11h1v1h-1zM3 11h1v1h-1zM5 11h1v1h-1zM7 11h1v1h-1zM9 11h1v1h-1zM11 11h1v1h-1zM13 11h1v1h-1z"/><path fill="#fff" d="M2 3h1v1h-1zM4 3h1v1h-1zM6 3h1v1h-1zM8 3h1v1h-1zM10 3h1v1h-1zM12 3h1v1h-1zM1 4h1v1h-1zM3 4h1v1h-1zM7 4h1v1h-1zM9 4h1v1h-1zM11 4h1v1h-1zM13 4h1v1h-1zM2 5h1v1h-1zM8 5h1v1h-1zM10 5h1v1h-1zM12 5h1v1h-1zM1 6h1v1h-1zM9 6h1v1h-1zM11 6h1v1h-1zM13 6h1v1h-1zM2 7h1v1h-1zM4 7h1v1h-1zM8 7h1v1h-1zM10 7h1v1h-1zM12 7h1v1h-1zM1 8h1v1h-1zM3 8h1v1h-1zM7 8h1v1h-1zM9 8h1v1h-1zM11 8h1v1h-1zM13 8h1v1h-1zM2 9h1v1h-1zM4 9h1v1h-1zM12 9h1v1h-1zM1 10h1v1h-1zM3 10h1v1h-1zM5 10h1v1h-1zM7 10h1v1h-1zM9 10h1v1h-1zM11 10h1v1h-1zM13 10h1v1h-1zM2 11h1v1h-1zM4 11h1v1h-1zM6 11h1v1h-1zM8 11h1v1h-1zM10 11h1v1h-1zM12 11h1v1h-1z"/></svg>
<div class="chk" style="left:83px;top:49px;width:23px;height:22px;box-sizing:border-box;border:1px solid;border-color:#808080 #fff #fff #808080;"></div>
<svg class="a" style="left:88px;top:54px" width="14" height="12" viewBox="0 0 14 12" shape-rendering="crispEdges"><path fill="#000080" d="M0 0h14v1h-14zM0 1h14v1h-14zM0 2h1v1h-1zM5 2h1v1h-1zM13 2h1v1h-1zM0 3h1v1h-1zM5 3h1v1h-1zM13 3h1v1h-1zM0 4h1v1h-1zM5 4h1v1h-1zM13 4h1v1h-1zM0 5h1v1h-1zM5 5h1v1h-1zM13 5h1v1h-1zM0 6h1v1h-1zM5 6h1v1h-1zM13 6h1v1h-1zM0 7h1v1h-1zM5 7h1v1h-1zM13 7h1v1h-1zM0 8h1v1h-1zM5 8h1v1h-1zM13 8h1v1h-1zM0 9h1v1h-1zM5 9h1v1h-1zM13 9h1v1h-1zM0 10h1v1h-1zM5 10h1v1h-1zM13 10h1v1h-1zM0 11h14v1h-14z"/><path fill="#fff" d="M1 2h4v1h-4zM1 3h4v1h-4zM1 4h1v1h-1zM4 4h1v1h-1zM1 5h4v1h-4zM1 6h1v1h-1zM4 6h1v1h-1zM1 7h4v1h-4zM1 8h1v1h-1zM4 8h1v1h-1zM1 9h4v1h-4zM1 10h4v1h-4z"/><path fill="#c0c0c0" d="M6 2h7v1h-7zM6 3h7v1h-7zM6 4h3v1h-3zM10 4h3v1h-3zM6 5h2v1h-2zM10 5h3v1h-3zM6 6h1v1h-1zM10 6h3v1h-3zM6 7h2v1h-2zM10 7h3v1h-3zM6 8h3v1h-3zM10 8h3v1h-3zM6 9h7v1h-7zM6 10h7v1h-7z"/><path fill="#000" d="M2 4h2v1h-2zM9 4h1v1h-1zM8 5h2v1h-2zM2 6h2v1h-2zM7 6h3v1h-3zM8 7h2v1h-2zM2 8h2v1h-2zM9 8h1v1h-1z"/></svg>
<svg class="a" style="left:118px;top:53px" width="15" height="14" viewBox="0 0 15 14" shape-rendering="crispEdges"><path fill="#808080" d="M0 0h2v1h-2zM11 0h1v1h-1zM0 1h3v1h-3zM10 1h1v1h-1zM1 2h3v1h-3zM9 2h1v1h-1zM2 3h3v1h-3zM8 3h2v1h-2zM3 4h3v1h-3zM7 4h2v1h-2zM4 5h4v1h-4zM5 6h3v1h-3zM4 7h5v1h-5zM3 8h3v1h-3zM7 8h3v1h-3zM2 9h3v1h-3zM8 9h2v1h-2zM1 10h3v1h-3zM9 10h2v1h-2zM0 11h3v1h-3zM10 11h1v1h-1zM0 12h2v1h-2zM11 12h1v1h-1z"/><path fill="#fff" d="M12 1h1v1h-1zM11 2h1v1h-1zM10 3h1v1h-1zM9 4h2v1h-2zM8 5h2v1h-2zM8 6h1v1h-1zM6 8h1v1h-1zM5 9h2v1h-2zM10 9h1v1h-1zM4 10h2v1h-2zM3 11h2v1h-2zM11 11h1v1h-1zM2 12h2v1h-2zM1 13h2v1h-2zM12 13h1v1h-1z"/></svg>
<svg class="a" style="left:140px;top:52px" width="16" height="15" viewBox="0 0 16 15" shape-rendering="crispEdges"><path fill="#000" d="M6 1h7v1h-7zM5 2h1v1h-1zM13 2h1v1h-1zM4 3h1v1h-1zM13 3h1v1h-1zM0 4h4v1h-4zM13 4h1v1h-1zM0 5h1v1h-1zM2 5h1v1h-1zM10 5h4v1h-4zM0 6h1v1h-1zM3 6h1v1h-1zM10 6h1v1h-1zM0 7h1v1h-1zM4 7h1v1h-1zM9 7h1v1h-1zM11 7h1v1h-1zM0 8h1v1h-1zM5 8h1v1h-1zM8 8h1v1h-1zM11 8h1v1h-1zM0 9h1v1h-1zM6 9h2v1h-2zM11 9h1v1h-1zM0 10h1v1h-1zM2 10h2v1h-2zM5 10h5v1h-5zM11 10h1v1h-1zM0 11h1v1h-1zM11 11h1v1h-1zM0 12h1v1h-1zM2 12h2v1h-2zM5 12h5v1h-5zM11 12h1v1h-1zM0 13h1v1h-1zM11 13h1v1h-1zM0 14h12v1h-12z"/><path fill="#000080" d="M14 1h2v1h-2zM14 2h2v1h-2zM14 3h2v1h-2zM14 4h2v1h-2zM14 5h2v1h-2zM14 6h2v1h-2z"/><path fill="#c0c0c0" d="M6 2h1v1h-1zM8 2h5v1h-5zM5 3h1v1h-1zM7 3h1v1h-1zM9 3h4v1h-4zM4 4h1v1h-1zM6 4h1v1h-1zM8 4h1v1h-1zM10 4h3v1h-3zM3 5h1v1h-1zM5 5h1v1h-1zM7 5h1v1h-1zM9 5h1v1h-1zM4 6h1v1h-1zM6 6h1v1h-1zM8 6h1v1h-1zM5 7h1v1h-1zM7 7h1v1h-1zM6 8h1v1h-1z"/><path fill="#fff" d="M7 2h1v1h-1zM6 3h1v1h-1zM8 3h1v1h-1zM5 4h1v1h-1zM7 4h1v1h-1zM9 4h1v1h-1zM1 5h1v1h-1zM4 5h1v1h-1zM6 5h1v1h-1zM8 5h1v1h-1zM1 6h2v1h-2zM5 6h1v1h-1zM7 6h1v1h-1zM9 6h1v1h-1zM1 7h3v1h-3zM6 7h1v1h-1zM8 7h1v1h-1zM10 7h1v1h-1zM1 8h4v1h-4zM7 8h1v1h-1zM9 8h2v1h-2zM1 9h5v1h-5zM8 9h3v1h-3zM1 10h1v1h-1zM4 10h1v1h-1zM10 10h1v1h-1zM1 11h10v1h-10zM1 12h1v1h-1zM4 12h1v1h-1zM10 12h1v1h-1zM1 13h10v1h-10z"/></svg>
<svg class="a" style="left:163px;top:52px" width="16" height="16" viewBox="0 0 16 16" shape-rendering="crispEdges"><path fill="#000" d="M0 0h13v1h-13zM0 1h1v1h-1zM12 1h1v1h-1zM0 2h1v1h-1zM12 2h1v1h-1zM0 3h1v1h-1zM12 3h1v1h-1zM0 4h1v1h-1zM12 4h1v1h-1zM0 5h1v1h-1zM12 5h1v1h-1zM0 6h1v1h-1zM12 6h1v1h-1zM0 7h1v1h-1zM9 7h4v1h-4zM0 8h1v1h-1zM8 8h1v1h-1zM11 8h1v1h-1zM13 8h1v1h-1zM0 9h1v1h-1zM7 9h1v1h-1zM11 9h2v1h-2zM14 9h1v1h-1zM0 10h1v1h-1zM6 10h1v1h-1zM8 10h6v1h-6zM15 10h1v1h-1zM0 11h1v1h-1zM6 11h1v1h-1zM8 11h6v1h-6zM15 11h1v1h-1zM0 12h7v1h-7zM11 12h2v1h-2zM15 12h1v1h-1zM7 13h1v1h-1zM11 13h1v1h-1zM14 13h1v1h-1zM8 14h1v1h-1zM13 14h1v1h-1zM9 15h4v1h-4z"/><path fill="#fff" d="M1 1h11v1h-11zM1 2h2v1h-2zM5 2h7v1h-7zM1 3h2v1h-2zM5 3h1v1h-1zM10 3h2v1h-2zM1 4h11v1h-11zM1 5h2v1h-2zM5 5h7v1h-7zM1 6h2v1h-2zM5 6h1v1h-1zM10 6h2v1h-2zM1 7h8v1h-8zM1 8h2v1h-2zM5 8h3v1h-3zM9 8h2v1h-2zM12 8h1v1h-1zM1 9h2v1h-2zM5 9h2v1h-2zM8 9h3v1h-3zM13 9h1v1h-1zM1 10h5v1h-5zM7 10h1v1h-1zM14 10h1v1h-1zM1 11h5v1h-5zM7 11h1v1h-1zM14 11h1v1h-1zM7 12h4v1h-4zM13 12h2v1h-2zM8 13h3v1h-3zM12 13h2v1h-2zM9 14h4v1h-4z"/><path fill="#000080" d="M3 2h2v1h-2zM3 3h2v1h-2zM6 3h4v1h-4zM3 5h2v1h-2zM3 6h2v1h-2zM6 6h4v1h-4zM3 8h2v1h-2zM3 9h2v1h-2z"/></svg>
<svg class="a" style="left:195px;top:52px" width="15" height="15" viewBox="0 0 15 15" shape-rendering="crispEdges"><path fill="#000" d="M7 0h6v1h-6zM6 1h1v1h-1zM13 1h1v1h-1zM5 2h1v1h-1zM9 2h2v1h-2zM14 2h1v1h-1zM5 3h1v1h-1zM8 3h1v1h-1zM10 3h1v1h-1zM14 3h1v1h-1zM0 4h9v1h-9zM10 4h1v1h-1zM14 4h1v1h-1zM0 5h1v1h-1zM8 5h2v1h-2zM13 5h1v1h-1zM0 6h1v1h-1zM8 6h1v1h-1zM12 6h1v1h-1zM0 7h1v1h-1zM8 7h1v1h-1zM11 7h1v1h-1zM0 8h1v1h-1zM8 8h1v1h-1zM11 8h1v1h-1zM0 9h1v1h-1zM8 9h4v1h-4zM0 10h1v1h-1zM8 10h1v1h-1zM0 11h1v1h-1zM8 11h4v1h-4zM0 12h1v1h-1zM8 12h1v1h-1zM11 12h1v1h-1zM0 13h1v1h-1zM8 13h1v1h-1zM11 13h1v1h-1zM0 14h12v1h-12z"/><path fill="#fff" d="M7 1h1v1h-1zM1 5h7v1h-7zM1 6h7v1h-7zM1 7h1v1h-1zM7 7h1v1h-1zM1 8h7v1h-7zM1 9h1v1h-1zM7 9h1v1h-1zM1 10h7v1h-7zM1 11h1v1h-1zM7 11h1v1h-1zM1 12h7v1h-7zM1 13h7v1h-7z"/><path fill="#ffff00" d="M8 1h5v1h-5zM6 2h3v1h-3zM11 2h3v1h-3zM6 3h2v1h-2zM11 3h3v1h-3zM11 4h3v1h-3zM10 5h3v1h-3zM9 6h3v1h-3zM9 7h2v1h-2zM9 8h2v1h-2zM9 12h2v1h-2zM9 13h2v1h-2z"/><path fill="#808080" d="M2 7h5v1h-5zM2 9h5v1h-5zM2 11h5v1h-5z"/></svg>
<div class="sunk" style="left:4px;top:75px;width:194px;height:473px;"><div class="in" id="tree"><div class="dotv" style="left:8px;top:16px;height:233px"></div>
<div class="dotv" style="left:27px;top:32px;height:201px"></div>
<div class="dotv" style="left:27px;top:256px;height:41px"></div>
<div class="dotv" style="left:46px;top:64px;height:25px"></div>
<div class="dotv" style="left:65px;top:96px;height:121px"></div>
<div class="dotv" style="left:84px;top:128px;height:41px"></div>
<svg class="a" style="left:0px;top:0px" width="16" height="16" shape-rendering="crispEdges"><use href="#scroll"/></svg>
<div class="t" id="t0w0" style="left:20.14px;top:2px;letter-spacing:-0.428px;">Local</div><div class="t" id="t0w1" style="left:47.48px;top:2px;letter-spacing:-0.247px;">Computer</div><div class="t" id="t0w2" style="left:97.14px;top:2px;letter-spacing:-0.497px;">Policy</div>
<div class="doth" style="left:14px;top:24px;width:5px"></div>
<div class="pm" style="left:4px;top:20px"><i></i></div>
<svg class="a" style="left:19px;top:16px" width="16" height="16" shape-rendering="crispEdges"><use href="#comp"/></svg>
<div class="t" id="t1w0" style="left:39.48px;top:18px;letter-spacing:-0.132px;">Computer</div><div class="t" id="t1w1" style="left:90.38px;top:18px;letter-spacing:-0.016px;">Configuration</div>
<div class="doth" style="left:33px;top:40px;width:5px"></div>
<div class="pm" style="left:23px;top:36px"><i></i><b></b></div>
<svg class="a" style="left:38px;top:32px" width="16" height="16" shape-rendering="crispEdges"><use href="#folder"/></svg>
<div class="t" id="t2w0" style="left:58.66px;top:34px;letter-spacing:-0.018px;">Software</div><div class="t" id="t2w1" style="left:105.21px;top:34px;letter-spacing:-0.088px;">Settings</div>
<div class="doth" style="left:33px;top:56px;width:5px"></div>
<div class="pm" style="left:23px;top:52px"><i></i></div>
<svg class="a" style="left:38px;top:48px" width="16" height="16" shape-rendering="crispEdges"><use href="#folder"/></svg>
<div class="t" id="t3w0" style="left:59.00px;top:50px;letter-spacing:-0.298px;">Windows</div><div class="t" id="t3w1" style="left:105.21px;top:50px;letter-spacing:-0.088px;">Settings</div>
<div class="doth" style="left:48px;top:72px;width:9px"></div>
<svg class="a" style="left:57px;top:64px" width="16" height="16" shape-rendering="crispEdges"><use href="#script"/></svg>
<div class="t" id="t4w0" style="left:77.66px;top:66px;letter-spacing:-0.322px;">Scripts</div><div class="t" id="t4w1" style="left:112.48px;top:66px;letter-spacing:0.065px;">(Startup/Shutdown)</div>
<div class="doth" style="left:52px;top:88px;width:5px"></div>
<div class="pm" style="left:42px;top:84px"><i></i></div>
<svg class="a" style="left:57px;top:80px" width="16" height="16" shape-rendering="crispEdges"><use href="#secsrv"/></svg>
<div class="t" id="t5w0" style="left:77.66px;top:82px;letter-spacing:-0.132px;">Security</div><div class="t" id="t5w1" style="left:120.19px;top:82px;letter-spacing:-0.084px;">Settings</div>
<div class="doth" style="left:71px;top:104px;width:5px"></div>
<div class="pm" style="left:61px;top:100px"><i></i><b></b></div>
<svg class="a" style="left:76px;top:96px" width="16" height="16" shape-rendering="crispEdges"><use href="#lockf"/></svg>
<div class="t" id="t6w0" style="left:97.00px;top:98px;letter-spacing:-0.214px;">Account</div><div class="t" id="t6w1" style="left:138.71px;top:98px;letter-spacing:-0.467px;">Policies</div>
<div class="doth" style="left:71px;top:120px;width:5px"></div>
<div class="pm" style="left:61px;top:116px"><i></i></div>
<svg class="a" style="left:76px;top:112px" width="16" height="16" shape-rendering="crispEdges"><use href="#lockf"/></svg>
<div class="t" id="t7w0" style="left:96.14px;top:114px;letter-spacing:-0.335px;">Local</div><div class="t" id="t7w1" style="left:123.60px;top:114px;letter-spacing:-0.451px;">Policies</div>
<div class="doth" style="left:90px;top:136px;width:5px"></div>
<div class="pm" style="left:80px;top:132px"><i></i><b></b></div>
<svg class="a" style="left:95px;top:128px" width="16" height="16" shape-rendering="crispEdges"><use href="#lockf"/></svg>
<div class="t" id="t8w0" style="left:116.00px;top:130px;letter-spacing:-0.277px;">Audit</div><div class="t" id="t8w1" style="left:143.14px;top:130px;letter-spacing:-0.497px;">Policy</div>
<div class="doth" style="left:90px;top:152px;width:5px"></div>
<div class="pm" style="left:80px;top:148px"><i></i><b></b></div>
<svg class="a" style="left:95px;top:144px" width="16" height="16" shape-rendering="crispEdges"><use href="#lockf"/></svg>
<div class="t" id="t9w0" style="left:115.31px;top:146px;letter-spacing:-0.494px;">User</div><div class="t" id="t9w1" style="left:140.14px;top:146px;letter-spacing:-0.195px;">Rights</div><div class="t" id="t9w2" style="left:174.00px;top:146px;letter-spacing:-0.997px;">Assignment</div>
<div class="doth" style="left:86px;top:168px;width:9px"></div>
<svg class="a" style="left:95px;top:160px" width="16" height="16" shape-rendering="crispEdges"><use href="#lockf"/></svg>
<div class="a" style="left:114px;top:160px;width:76px;height:16px;background:#d4d0c8"></div>
<div class="t" id="t10w0" style="left:115.66px;top:162px;letter-spacing:-0.125px;">Security</div><div class="t" id="t10w1" style="left:158.07px;top:162px;letter-spacing:0.028px;">Options</div>
<div class="doth" style="left:71px;top:184px;width:5px"></div>
<div class="pm" style="left:61px;top:180px"><i></i><b></b></div>
<svg class="a" style="left:76px;top:176px" width="16" height="16" shape-rendering="crispEdges"><use href="#folder"/></svg>
<div class="t" id="t11w0" style="left:96.14px;top:178px;letter-spacing:-0.526px;">Public</div><div class="t" id="t11w1" style="left:126.50px;top:178px;letter-spacing:-0.451px;">Key</div><div class="t" id="t11w2" style="left:147.76px;top:178px;letter-spacing:-0.474px;">Policies</div>
<div class="doth" style="left:71px;top:200px;width:5px"></div>
<div class="pm" style="left:61px;top:196px"><i></i><b></b></div>
<svg class="a" style="left:76px;top:192px" width="16" height="16" shape-rendering="crispEdges"><use href="#folder"/></svg>
<div class="t" id="t12w0" style="left:96.66px;top:194px;letter-spacing:-0.089px;">Software</div><div class="t" id="t12w1" style="left:142.14px;top:194px;letter-spacing:-0.060px;">Restriction Policies</div>
<div class="doth" style="left:71px;top:216px;width:5px"></div>
<div class="pm" style="left:61px;top:212px"><i></i><b></b></div>
<svg class="a" style="left:76px;top:208px" width="16" height="16" shape-rendering="crispEdges"><use href="#ipsec"/></svg>
<div class="t" id="t13w0" style="left:96.14px;top:210px;letter-spacing:-0.072px;">IP</div><div class="t" id="t13w1" style="left:109.66px;top:210px;letter-spacing:-0.199px;">Security</div><div class="t" id="t13w2" style="left:151.14px;top:210px;letter-spacing:-0.529px;">Policies&nbsp;on Local Computer</div>
<div class="doth" style="left:33px;top:232px;width:5px"></div>
<div class="pm" style="left:23px;top:228px"><i></i><b></b></div>
<svg class="a" style="left:38px;top:224px" width="16" height="16" shape-rendering="crispEdges"><use href="#folder"/></svg>
<div class="t" id="t14w0" style="left:59.00px;top:226px;letter-spacing:-0.126px;">Administrative</div><div class="t" id="t14w1" style="left:129.83px;top:226px;letter-spacing:-0.202px;">Templates</div>
<div class="doth" style="left:14px;top:248px;width:5px"></div>
<div class="pm" style="left:4px;top:244px"><i></i></div>
<svg class="a" style="left:19px;top:240px" width="16" height="16" shape-rendering="crispEdges"><use href="#user"/></svg>
<div class="t" id="t15w0" style="left:39.31px;top:242px;letter-spacing:-0.341px;">User</div><div class="t" id="t15w1" style="left:65.06px;top:242px;letter-spacing:0.011px;">Configuration</div>
<div class="doth" style="left:33px;top:264px;width:5px"></div>
<div class="pm" style="left:23px;top:260px"><i></i><b></b></div>
<svg class="a" style="left:38px;top:256px" width="16" height="16" shape-rendering="crispEdges"><use href="#folder"/></svg>
<div class="t" id="t16w0" style="left:58.66px;top:258px;letter-spacing:-0.018px;">Software</div><div class="t" id="t16w1" style="left:105.21px;top:258px;letter-spacing:-0.088px;">Settings</div>
<div class="doth" style="left:33px;top:280px;width:5px"></div>
<div class="pm" style="left:23px;top:276px"><i></i><b></b></div>
<svg class="a" style="left:38px;top:272px" width="16" height="16" shape-rendering="crispEdges"><use href="#folder"/></svg>
<div class="t" id="t17w0" style="left:59.00px;top:274px;letter-spacing:-0.298px;">Windows</div><div class="t" id="t17w1" style="left:105.21px;top:274px;letter-spacing:-0.088px;">Settings</div>
<div class="doth" style="left:33px;top:296px;width:5px"></div>
<div class="pm" style="left:23px;top:292px"><i></i><b></b></div>
<svg class="a" style="left:38px;top:288px" width="16" height="16" shape-rendering="crispEdges"><use href="#folder"/></svg>
<div class="t" id="t18w0" style="left:59.00px;top:290px;letter-spacing:-0.126px;">Administrative</div><div class="t" id="t18w1" style="left:129.83px;top:290px;letter-spacing:-0.202px;">Templates</div>
<div class="chk" style="left:0px;top:453px;width:190px;height:16px;"></div>
<div class="sb" style="left:0px;top:453px;width:16px;height:16px;"></div>
<div class="sb" style="left:174px;top:453px;width:16px;height:16px;"></div>
<div class="sb" style="left:16px;top:453px;width:107px;height:16px;"></div>
<svg class="a" style="left:5px;top:457px" width="4" height="7" viewBox="0 0 4 7" shape-rendering="crispEdges"><path d="M3 0h1v7h-1zM2 1h1v5h-1zM1 2h1v3h-1zM0 3h1v1h-1z"/></svg>
<svg class="a" style="left:180px;top:457px" width="4" height="7" viewBox="0 0 4 7" shape-rendering="crispEdges"><path d="M0 0h1v7h-1zM1 1h1v5h-1zM2 2h1v3h-1zM3 3h1v1h-1z"/></svg></div></div>
<div class="sunk" style="left:201px;top:75px;width:596px;height:473px;"><div class="in" id="list"><div class="hdr" style="left:0px;top:0px;width:284px;"></div>
<div class="hdr" style="left:284px;top:0px;width:120px;"></div>
<div class="hdr" style="left:404px;top:0px;width:185px;"></div>
<div class="t" id="h1" style="left:5.14px;top:3px;letter-spacing:-0.297px;">Policy</div>
<div class="t" id="h2w0" style="left:289.66px;top:3px;letter-spacing:-0.127px;">Security</div><div class="t" id="h2w1" style="left:332.22px;top:3px;letter-spacing:0.025px;">Setting</div>
<svg class="a" style="left:45px;top:5px" width="8" height="7" viewBox="0 0 8 7" shape-rendering="crispEdges"><path d="M3 0h1v2h-1zM2 2h1v2h-1zM1 4h1v2h-1zM0 6h1v1h-1z" fill="#808080"/><path d="M4 0h1v2h-1zM5 2h1v2h-1zM6 4h1v2h-1zM1 6h7v1h-7z" fill="#fff"/></svg>
<svg class="a" style="left:2px;top:19px" width="16" height="16"><use href="#ic0"/></svg>
<div class="t" id="p0aw0" style="left:19.14px;top:22px;letter-spacing:-0.047px;">Devices:</div>
<div class="t" id="p0bw0" style="left:64.00px;top:22px;letter-spacing:-0.263px;">Allowed</div><div class="t" id="p0bw1" style="left:104.37px;top:22px;letter-spacing:0.347px;">to</div><div class="t" id="p0bw2" style="left:117.50px;top:22px;letter-spacing:-0.188px;">format</div><div class="t" id="p0bw3" style="left:151.47px;top:22px;letter-spacing:-0.121px;">and</div><div class="t" id="p0bw4" style="left:172.67px;top:22px;letter-spacing:0.069px;">eject</div><div class="t" id="p0bw5" style="left:199.57px;top:22px;letter-spacing:-0.097px;">removable</div><div class="t" id="p0bw6" style="left:253.07px;top:22px;letter-spacing:-0.525px;">media</div>
<div class="t" id="s0w0" style="left:290.00px;top:22px;letter-spacing:-0.073px;">Administrators</div>
<svg class="a" style="left:2px;top:36px" width="16" height="16"><use href="#ic0"/></svg>
<div class="t" id="p1aw0" style="left:19.14px;top:39px;letter-spacing:-0.047px;">Devices:</div>
<div class="t" id="p1bw0" style="left:63.14px;top:39px;letter-spacing:0.044px;">Prevent</div><div class="t" id="p1bw1" style="left:104.71px;top:39px;letter-spacing:-0.158px;">users</div><div class="t" id="p1bw2" style="left:134.69px;top:39px;letter-spacing:-0.415px;">from</div><div class="t" id="p1bw3" style="left:158.23px;top:39px;letter-spacing:-0.124px;">installing</div><div class="t" id="p1bw4" style="left:202.67px;top:39px;letter-spacing:0.143px;">printer</div><div class="t" id="p1bw5" style="left:238.35px;top:39px;letter-spacing:-0.002px;">drivers</div>
<div class="t" id="s1w0" style="left:289.14px;top:39px;letter-spacing:0.018px;">Enabled</div>
<svg class="a" style="left:2px;top:53px" width="16" height="16"><use href="#ic0"/></svg>
<div class="t" id="p2aw0" style="left:19.14px;top:56px;letter-spacing:-0.047px;">Devices:</div>
<div class="t" id="p2bw0" style="left:63.14px;top:56px;letter-spacing:-0.066px;">Restrict</div><div class="t" id="p2bw1" style="left:103.48px;top:56px;letter-spacing:-0.791px;">CD-ROM</div><div class="t" id="p2bw2" style="left:147.66px;top:56px;letter-spacing:-0.510px;">access</div><div class="t" id="p2bw3" style="left:183.00px;top:56px;letter-spacing:0.272px;">to</div><div class="t" id="p2bw4" style="left:195.31px;top:56px;letter-spacing:-0.313px;">locally</div><div class="t" id="p2bw5" style="left:227.31px;top:56px;letter-spacing:-0.097px;">logged-o</div><div class="t" id="p2bw6" style="left:269.14px;top:56px;letter-spacing:1.842px;">...</div>
<div class="t" id="s2w0" style="left:289.14px;top:56px;letter-spacing:-0.046px;">Disabled</div>
<svg class="a" style="left:2px;top:70px" width="16" height="16"><use href="#ic0"/></svg>
<div class="t" id="p3aw0" style="left:19.14px;top:73px;letter-spacing:-0.047px;">Devices:</div>
<div class="t" id="p3bw0" style="left:63.14px;top:73px;letter-spacing:-0.019px;">Restrict</div><div class="t" id="p3bw1" style="left:104.38px;top:73px;letter-spacing:-0.220px;">floppy</div><div class="t" id="p3bw2" style="left:136.33px;top:73px;letter-spacing:-0.453px;">access</div><div class="t" id="p3bw3" style="left:172.00px;top:73px;letter-spacing:0.347px;">to</div><div class="t" id="p3bw4" style="left:184.44px;top:73px;letter-spacing:-0.271px;">locally</div><div class="t" id="p3bw5" style="left:216.74px;top:73px;letter-spacing:-0.024px;">logged-on</div><div class="t" id="p3bw6" style="left:268.05px;top:73px;letter-spacing:1.889px;">...</div>
<div class="t" id="s3w0" style="left:289.14px;top:73px;letter-spacing:-0.046px;">Disabled</div>
<svg class="a" style="left:2px;top:87px" width="16" height="16"><use href="#ic0"/></svg>
<div class="t" id="p4aw0" style="left:19.14px;top:90px;letter-spacing:-0.047px;">Devices:</div>
<div class="t" id="p4bw0" style="left:63.31px;top:90px;letter-spacing:-0.275px;">Unsigned</div><div class="t" id="p4bw1" style="left:110.93px;top:90px;letter-spacing:0.009px;">driver</div><div class="t" id="p4bw2" style="left:141.77px;top:90px;letter-spacing:-0.035px;">installation</div><div class="t" id="p4bw3" style="left:196.08px;top:90px;letter-spacing:-0.032px;">behavior</div>
<div class="t" id="s4w0" style="left:290.00px;top:90px;letter-spacing:-0.085px;">Warn</div><div class="t" id="s4w1" style="left:318.31px;top:90px;letter-spacing:0.179px;">but</div><div class="t" id="s4w2" style="left:337.66px;top:90px;letter-spacing:-0.464px;">allow</div><div class="t" id="s4w3" style="left:364.31px;top:90px;letter-spacing:-0.156px;">inst</div><div class="t" id="s4w4" style="left:381.14px;top:90px;letter-spacing:1.842px;">...</div>
<svg class="a" style="left:2px;top:104px" width="16" height="16"><use href="#ic0"/></svg>
<div class="t" id="p5aw0" style="left:19.14px;top:107px;letter-spacing:-0.485px;">Domain</div><div class="t" id="p5aw1" style="left:57.66px;top:107px;letter-spacing:0.104px;">controller:</div>
<div class="t" id="p5bw0" style="left:110.00px;top:107px;letter-spacing:-0.605px;">Allow</div><div class="t" id="p5bw1" style="left:137.83px;top:107px;letter-spacing:-0.067px;">server</div><div class="t" id="p5bw2" style="left:171.66px;top:107px;letter-spacing:0.027px;">operators</div><div class="t" id="p5bw3" style="left:222.00px;top:107px;letter-spacing:0.272px;">to</div><div class="t" id="p5bw4" style="left:234.83px;top:107px;letter-spacing:-0.336px;">schedu</div><div class="t" id="p5bw5" style="left:268.14px;top:107px;letter-spacing:1.842px;">...</div>
<div class="t" id="s5w0" style="left:289.14px;top:107px;letter-spacing:0.130px;">Not</div><div class="t" id="s5w1" style="left:309.88px;top:107px;letter-spacing:-0.030px;">Defined</div>
<svg class="a" style="left:2px;top:121px" width="16" height="16"><use href="#ic1"/></svg>
<div class="t" id="p6aw0" style="left:19.14px;top:124px;letter-spacing:-0.485px;">Domain</div><div class="t" id="p6aw1" style="left:57.66px;top:124px;letter-spacing:0.104px;">controller:</div>
<div class="t" id="p6bw0" style="left:109.14px;top:124px;letter-spacing:-1.090px;">LDAP</div><div class="t" id="p6bw1" style="left:138.00px;top:124px;letter-spacing:-0.031px;">server</div><div class="t" id="p6bw2" style="left:172.22px;top:124px;letter-spacing:-0.312px;">signing</div><div class="t" id="p6bw3" style="left:207.93px;top:124px;letter-spacing:-0.071px;">requirements</div>
<div class="t" id="s6w0" style="left:289.14px;top:124px;letter-spacing:0.003px;">None</div>
<svg class="a" style="left:2px;top:138px" width="16" height="16"><use href="#ic0"/></svg>
<div class="t" id="p7aw0" style="left:19.14px;top:141px;letter-spacing:-0.485px;">Domain</div><div class="t" id="p7aw1" style="left:57.66px;top:141px;letter-spacing:0.104px;">controller:</div>
<div class="t" id="p7bw0" style="left:109.14px;top:141px;letter-spacing:-0.273px;">Refuse</div><div class="t" id="p7bw1" style="left:145.53px;top:141px;letter-spacing:-0.371px;">machine</div><div class="t" id="p7bw2" style="left:188.12px;top:141px;letter-spacing:-0.168px;">account</div><div class="t" id="p7bw3" style="left:229.02px;top:141px;letter-spacing:-0.166px;">passwor</div><div class="t" id="p7bw4" style="left:269.08px;top:141px;letter-spacing:1.872px;">...</div>
<div class="t" id="s7w0" style="left:289.14px;top:141px;letter-spacing:0.130px;">Not</div><div class="t" id="s7w1" style="left:309.88px;top:141px;letter-spacing:-0.030px;">Defined</div>
<svg class="a" style="left:2px;top:155px" width="16" height="16"><use href="#ic1"/></svg>
<div class="t" id="p8aw0" style="left:19.14px;top:158px;letter-spacing:-0.485px;">Domain</div><div class="t" id="p8aw1" style="left:57.31px;top:158px;letter-spacing:-0.120px;">member:</div>
<div class="t" id="p8bw0" style="left:102.14px;top:158px;letter-spacing:-0.206px;">Digitally</div><div class="t" id="p8bw1" style="left:142.66px;top:158px;letter-spacing:0.039px;">encrypt</div><div class="t" id="p8bw2" style="left:182.66px;top:158px;letter-spacing:-0.383px;">or</div><div class="t" id="p8bw3" style="left:195.83px;top:158px;letter-spacing:-0.463px;">sign</div><div class="t" id="p8bw4" style="left:217.83px;top:158px;letter-spacing:-0.280px;">secure</div><div class="t" id="p8bw5" style="left:252.66px;top:158px;letter-spacing:-0.731px;">cha</div><div class="t" id="p8bw6" style="left:269.14px;top:158px;letter-spacing:1.842px;">...</div>
<div class="t" id="s8w0" style="left:289.14px;top:158px;letter-spacing:0.018px;">Enabled</div>
<svg class="a" style="left:2px;top:172px" width="16" height="16"><use href="#ic0"/></svg>
<div class="t" id="p9aw0" style="left:19.14px;top:175px;letter-spacing:-0.485px;">Domain</div><div class="t" id="p9aw1" style="left:57.31px;top:175px;letter-spacing:-0.120px;">member:</div>
<div class="t" id="p9bw0" style="left:102.14px;top:175px;letter-spacing:-0.206px;">Digitally</div><div class="t" id="p9bw1" style="left:142.66px;top:175px;letter-spacing:0.039px;">encrypt</div><div class="t" id="p9bw2" style="left:182.83px;top:175px;letter-spacing:-0.280px;">secure</div><div class="t" id="p9bw3" style="left:217.66px;top:175px;letter-spacing:-0.244px;">channel</div><div class="t" id="p9bw4" style="left:257.66px;top:175px;letter-spacing:-0.961px;">da</div><div class="t" id="p9bw5" style="left:269.14px;top:175px;letter-spacing:1.842px;">...</div>
<div class="t" id="s9w0" style="left:289.14px;top:175px;letter-spacing:0.018px;">Enabled</div>
<svg class="a" style="left:2px;top:189px" width="16" height="16"><use href="#ic0"/></svg>
<div class="t" id="p10aw0" style="left:19.14px;top:192px;letter-spacing:-0.485px;">Domain</div><div class="t" id="p10aw1" style="left:57.31px;top:192px;letter-spacing:-0.120px;">member:</div>
<div class="t" id="p10bw0" style="left:102.14px;top:192px;letter-spacing:-0.206px;">Digitally</div><div class="t" id="p10bw1" style="left:142.83px;top:192px;letter-spacing:-0.463px;">sign</div><div class="t" id="p10bw2" style="left:164.83px;top:192px;letter-spacing:-0.280px;">secure</div><div class="t" id="p10bw3" style="left:199.66px;top:192px;letter-spacing:-0.244px;">channel</div><div class="t" id="p10bw4" style="left:239.66px;top:192px;letter-spacing:-0.045px;">data</div><div class="t" id="p10bw5" style="left:264.48px;top:192px;letter-spacing:0.000px;">(</div><div class="t" id="p10bw6" style="left:268.14px;top:192px;letter-spacing:1.842px;">...</div>
<div class="t" id="s10w0" style="left:289.14px;top:192px;letter-spacing:0.018px;">Enabled</div>
<svg class="a" style="left:2px;top:206px" width="16" height="16"><use href="#ic0"/></svg>
<div class="t" id="p11aw0" style="left:19.14px;top:209px;letter-spacing:-0.485px;">Domain</div><div class="t" id="p11aw1" style="left:57.31px;top:209px;letter-spacing:-0.120px;">member:</div>
<div class="t" id="p11bw0" style="left:102.14px;top:209px;letter-spacing:-0.397px;">Disable</div><div class="t" id="p11bw1" style="left:139.31px;top:209px;letter-spacing:-0.407px;">machine</div><div class="t" id="p11bw2" style="left:181.66px;top:209px;letter-spacing:-0.203px;">account</div><div class="t" id="p11bw3" style="left:222.31px;top:209px;letter-spacing:-0.110px;">password</div><div class="t" id="p11bw4" style="left:268.14px;top:209px;letter-spacing:1.842px;">...</div>
<div class="t" id="s11w0" style="left:289.14px;top:209px;letter-spacing:-0.046px;">Disabled</div>
<svg class="a" style="left:2px;top:223px" width="16" height="16"><use href="#ic0"/></svg>
<div class="t" id="p12aw0" style="left:19.14px;top:226px;letter-spacing:-0.485px;">Domain</div><div class="t" id="p12aw1" style="left:57.31px;top:226px;letter-spacing:-0.120px;">member:</div>
<div class="t" id="p12bw0" style="left:102.14px;top:226px;letter-spacing:-0.540px;">Maximum</div><div class="t" id="p12bw1" style="left:149.31px;top:226px;letter-spacing:-0.407px;">machine</div><div class="t" id="p12bw2" style="left:191.66px;top:226px;letter-spacing:-0.203px;">account</div><div class="t" id="p12bw3" style="left:232.31px;top:226px;letter-spacing:-0.233px;">passwo</div><div class="t" id="p12bw4" style="left:268.14px;top:226px;letter-spacing:1.842px;">...</div>
<div class="t" id="s12w0" style="left:289.66px;top:226px;letter-spacing:-0.340px;">30</div><div class="t" id="s12w1" style="left:305.07px;top:226px;letter-spacing:0.012px;">days</div>
<svg class="a" style="left:2px;top:240px" width="16" height="16"><use href="#ic0"/></svg>
<div class="t" id="p13aw0" style="left:19.14px;top:243px;letter-spacing:-0.485px;">Domain</div><div class="t" id="p13aw1" style="left:57.31px;top:243px;letter-spacing:-0.120px;">member:</div>
<div class="t" id="p13bw0" style="left:102.14px;top:243px;letter-spacing:-0.203px;">Require</div><div class="t" id="p13bw1" style="left:142.83px;top:243px;letter-spacing:0.043px;">strong</div><div class="t" id="p13bw2" style="left:176.48px;top:243px;letter-spacing:-0.204px;">(Windows</div><div class="t" id="p13bw3" style="left:226.48px;top:243px;letter-spacing:-0.227px;">2000</div><div class="t" id="p13bw4" style="left:253.66px;top:243px;letter-spacing:-0.383px;">or</div><div class="t" id="p13bw5" style="left:266.31px;top:243px;letter-spacing:0.000px;">l</div><div class="t" id="p13bw6" style="left:268.14px;top:243px;letter-spacing:1.842px;">...</div>
<div class="t" id="s13w0" style="left:289.14px;top:243px;letter-spacing:-0.046px;">Disabled</div>
<svg class="a" style="left:2px;top:257px" width="16" height="16"><use href="#ic0"/></svg>
<div class="t" id="p14aw0" style="left:19.14px;top:260px;letter-spacing:0.256px;">Interactive</div><div class="t" id="p14aw1" style="left:75.31px;top:260px;letter-spacing:0.142px;">logon:</div>
<div class="t" id="p14bw0" style="left:108.14px;top:260px;letter-spacing:-0.677px;">Do</div><div class="t" id="p14bw1" style="left:124.43px;top:260px;letter-spacing:0.230px;">not</div><div class="t" id="p14bw2" style="left:143.91px;top:260px;letter-spacing:-0.279px;">display</div><div class="t" id="p14bw3" style="left:179.82px;top:260px;letter-spacing:-0.120px;">last</div><div class="t" id="p14bw4" style="left:199.97px;top:260px;letter-spacing:-0.174px;">user</div><div class="t" id="p14bw5" style="left:224.14px;top:260px;letter-spacing:-0.403px;">name</div>
<div class="t" id="s14w0" style="left:289.14px;top:260px;letter-spacing:-0.046px;">Disabled</div>
<div class="a" style="left:18px;top:274px;width:386px;height:17px;background:#0a246a;box-sizing:border-box;border:1px dotted #e8c878;"></div>
<svg class="a" style="left:2px;top:274px" width="16" height="16"><use href="#ic2"/></svg>
<div class="t" id="p15aw0" style="left:19.14px;top:277px;letter-spacing:0.256px;color:#fff;">Interactive</div><div class="t" id="p15aw1" style="left:75.31px;top:277px;letter-spacing:0.142px;color:#fff;">logon:</div>
<div class="t" id="p15bw0" style="left:108.14px;top:277px;letter-spacing:-0.756px;color:#fff;">Do</div><div class="t" id="p15bw1" style="left:124.31px;top:277px;letter-spacing:0.179px;color:#fff;">not</div><div class="t" id="p15bw2" style="left:143.31px;top:277px;letter-spacing:-0.018px;color:#fff;">require</div><div class="t" id="p15bw3" style="left:180.48px;top:277px;letter-spacing:-0.504px;color:#fff;">CTRL+ALT+DEL</div>
<div class="t" id="s15w0" style="left:289.14px;top:277px;letter-spacing:-0.046px;color:#fff;">Disabled</div>
<svg class="a" style="left:2px;top:291px" width="16" height="16"><use href="#ic0"/></svg>
<div class="t" id="p16aw0" style="left:19.14px;top:294px;letter-spacing:0.256px;">Interactive</div><div class="t" id="p16aw1" style="left:75.31px;top:294px;letter-spacing:0.142px;">logon:</div>
<div class="t" id="p16bw0" style="left:108.14px;top:294px;letter-spacing:-0.309px;">Message</div><div class="t" id="p16bw1" style="left:154.53px;top:294px;letter-spacing:0.482px;">text</div><div class="t" id="p16bw2" style="left:177.80px;top:294px;letter-spacing:-0.327px;">for</div><div class="t" id="p16bw3" style="left:193.31px;top:294px;letter-spacing:-0.146px;">users</div><div class="t" id="p16bw4" style="left:222.99px;top:294px;letter-spacing:0.155px;">attemptin</div><div class="t" id="p16bw5" style="left:269.02px;top:294px;letter-spacing:1.901px;">...</div>
<svg class="a" style="left:2px;top:308px" width="16" height="16"><use href="#ic0"/></svg>
<div class="t" id="p17aw0" style="left:19.14px;top:311px;letter-spacing:0.256px;">Interactive</div><div class="t" id="p17aw1" style="left:75.31px;top:311px;letter-spacing:0.142px;">logon:</div>
<div class="t" id="p17bw0" style="left:108.14px;top:311px;letter-spacing:-0.308px;">Message</div><div class="t" id="p17bw1" style="left:154.54px;top:311px;letter-spacing:0.130px;">title</div><div class="t" id="p17bw2" style="left:175.79px;top:311px;letter-spacing:-0.326px;">for</div><div class="t" id="p17bw3" style="left:191.29px;top:311px;letter-spacing:-0.145px;">users</div><div class="t" id="p17bw4" style="left:220.99px;top:311px;letter-spacing:0.155px;">attemptin</div><div class="t" id="p17bw5" style="left:267.02px;top:311px;letter-spacing:1.902px;">...</div>
<div class="t" id="s17w0" style="left:289.14px;top:311px;letter-spacing:0.130px;">Not</div><div class="t" id="s17w1" style="left:309.88px;top:311px;letter-spacing:-0.030px;">Defined</div>
<svg class="a" style="left:2px;top:325px" width="16" height="16"><use href="#ic0"/></svg>
<div class="t" id="p18aw0" style="left:19.14px;top:328px;letter-spacing:0.256px;">Interactive</div><div class="t" id="p18aw1" style="left:75.31px;top:328px;letter-spacing:0.142px;">logon:</div>
<div class="t" id="p18bw0" style="left:108.14px;top:328px;letter-spacing:-0.401px;">Number</div><div class="t" id="p18bw1" style="left:148.89px;top:328px;letter-spacing:-0.826px;">of</div><div class="t" id="p18bw2" style="left:160.62px;top:328px;letter-spacing:-0.045px;">previous</div><div class="t" id="p18bw3" style="left:204.88px;top:328px;letter-spacing:-0.242px;">logons</div><div class="t" id="p18bw4" style="left:239.77px;top:328px;letter-spacing:0.319px;">to</div><div class="t" id="p18bw5" style="left:252.50px;top:328px;letter-spacing:-0.760px;">cac</div><div class="t" id="p18bw6" style="left:268.08px;top:328px;letter-spacing:1.872px;">...</div>
<div class="t" id="s18w0" style="left:289.31px;top:328px;letter-spacing:0.181px;">10</div><div class="t" id="s18w1" style="left:304.99px;top:328px;letter-spacing:-0.013px;">logons</div>
<svg class="a" style="left:2px;top:342px" width="16" height="16"><use href="#ic0"/></svg>
<div class="t" id="p19aw0" style="left:19.14px;top:345px;letter-spacing:0.256px;">Interactive</div><div class="t" id="p19aw1" style="left:75.31px;top:345px;letter-spacing:0.142px;">logon:</div>
<div class="t" id="p19bw0" style="left:108.14px;top:345px;letter-spacing:-0.327px;">Prompt</div><div class="t" id="p19bw1" style="left:145.31px;top:345px;letter-spacing:-0.219px;">user</div><div class="t" id="p19bw2" style="left:170.00px;top:345px;letter-spacing:0.272px;">to</div><div class="t" id="p19bw3" style="left:182.66px;top:345px;letter-spacing:-0.260px;">change</div><div class="t" id="p19bw4" style="left:220.31px;top:345px;letter-spacing:-0.110px;">password</div><div class="t" id="p19bw5" style="left:269.14px;top:345px;letter-spacing:1.842px;">...</div>
<div class="t" id="s19w0" style="left:289.31px;top:345px;letter-spacing:0.004px;">14</div><div class="t" id="s19w1" style="left:305.07px;top:345px;letter-spacing:0.012px;">days</div>
<svg class="a" style="left:2px;top:359px" width="16" height="16"><use href="#ic0"/></svg>
<div class="t" id="p20aw0" style="left:19.14px;top:362px;letter-spacing:0.256px;">Interactive</div><div class="t" id="p20aw1" style="left:75.31px;top:362px;letter-spacing:0.142px;">logon:</div>
<div class="t" id="p20bw0" style="left:108.14px;top:362px;letter-spacing:-0.168px;">Require</div><div class="t" id="p20bw1" style="left:148.38px;top:362px;letter-spacing:-0.446px;">Domain</div><div class="t" id="p20bw2" style="left:186.95px;top:362px;letter-spacing:-0.094px;">Controller</div><div class="t" id="p20bw3" style="left:237.43px;top:362px;letter-spacing:0.105px;">authe</div><div class="t" id="p20bw4" style="left:265.08px;top:362px;letter-spacing:1.872px;">...</div>
<div class="t" id="s20w0" style="left:289.14px;top:362px;letter-spacing:-0.046px;">Disabled</div>
<svg class="a" style="left:2px;top:376px" width="16" height="16"><use href="#ic0"/></svg>
<div class="t" id="p21aw0" style="left:19.14px;top:379px;letter-spacing:0.256px;">Interactive</div><div class="t" id="p21aw1" style="left:75.31px;top:379px;letter-spacing:0.142px;">logon:</div>
<div class="t" id="p21bw0" style="left:108.14px;top:379px;letter-spacing:-0.137px;">Require</div><div class="t" id="p21bw1" style="left:149.28px;top:379px;letter-spacing:-0.271px;">smart</div><div class="t" id="p21bw2" style="left:179.44px;top:379px;letter-spacing:-0.075px;">card</div>
<div class="t" id="s21w0" style="left:289.14px;top:379px;letter-spacing:-0.046px;">Disabled</div>
<svg class="a" style="left:2px;top:393px" width="16" height="16"><use href="#ic0"/></svg>
<div class="t" id="p22aw0" style="left:19.14px;top:396px;letter-spacing:0.256px;">Interactive</div><div class="t" id="p22aw1" style="left:75.31px;top:396px;letter-spacing:0.142px;">logon:</div>
<div class="t" id="p22bw0" style="left:108.66px;top:396px;letter-spacing:-0.460px;">Smart</div><div class="t" id="p22bw1" style="left:139.88px;top:396px;letter-spacing:-0.099px;">card</div><div class="t" id="p22bw2" style="left:163.72px;top:396px;letter-spacing:-0.074px;">removal</div><div class="t" id="p22bw3" style="left:205.02px;top:396px;letter-spacing:-0.023px;">behavior</div>
<div class="t" id="s22w0" style="left:289.14px;top:396px;letter-spacing:-0.256px;">No</div><div class="t" id="s22w1" style="left:306.73px;top:396px;letter-spacing:0.064px;">Action</div>
<svg class="a" style="left:2px;top:410px" width="16" height="16"><use href="#ic0"/></svg>
<div class="t" id="p23aw0" style="left:19.14px;top:413px;letter-spacing:-0.224px;">Microsoft</div><div class="t" id="p23aw1" style="left:65.31px;top:413px;letter-spacing:0.167px;">network</div><div class="t" id="p23aw2" style="left:108.66px;top:413px;letter-spacing:0.100px;">client:</div>
<div class="t" id="p23bw0" style="left:140.14px;top:413px;letter-spacing:-0.206px;">Digitally</div><div class="t" id="p23bw1" style="left:180.83px;top:413px;letter-spacing:-0.463px;">sign</div><div class="t" id="p23bw2" style="left:202.66px;top:413px;letter-spacing:-0.370px;">communicatio</div><div class="t" id="p23bw3" style="left:266.14px;top:413px;letter-spacing:1.842px;">...</div>
<div class="t" id="s23w0" style="left:289.14px;top:413px;letter-spacing:-0.046px;">Disabled</div>
<svg class="a" style="left:2px;top:427px" width="16" height="16"><use href="#ic0"/></svg>
<div class="t" id="p24aw0" style="left:19.14px;top:430px;letter-spacing:-0.224px;">Microsoft</div><div class="t" id="p24aw1" style="left:65.31px;top:430px;letter-spacing:0.167px;">network</div><div class="t" id="p24aw2" style="left:108.66px;top:430px;letter-spacing:0.100px;">client:</div>
<div class="t" id="p24bw0" style="left:140.14px;top:430px;letter-spacing:-0.206px;">Digitally</div><div class="t" id="p24bw1" style="left:180.83px;top:430px;letter-spacing:-0.463px;">sign</div><div class="t" id="p24bw2" style="left:202.66px;top:430px;letter-spacing:-0.370px;">communicatio</div><div class="t" id="p24bw3" style="left:266.14px;top:430px;letter-spacing:1.842px;">...</div>
<div class="t" id="s24w0" style="left:289.14px;top:430px;letter-spacing:0.018px;">Enabled</div>
<svg class="a" style="left:2px;top:444px" width="16" height="16"><use href="#ic0"/></svg>
<div class="t" id="p25aw0" style="left:19.14px;top:447px;letter-spacing:-0.224px;">Microsoft</div><div class="t" id="p25aw1" style="left:65.31px;top:447px;letter-spacing:0.167px;">network</div><div class="t" id="p25aw2" style="left:108.66px;top:447px;letter-spacing:0.100px;">client:</div>
<div class="t" id="p25bw0" style="left:140.66px;top:447px;letter-spacing:-0.576px;">Send</div><div class="t" id="p25bw1" style="left:167.31px;top:447px;letter-spacing:0.076px;">unencrypted</div><div class="t" id="p25bw2" style="left:231.31px;top:447px;letter-spacing:-0.233px;">passwo</div><div class="t" id="p25bw3" style="left:267.14px;top:447px;letter-spacing:1.842px;">...</div>
<div class="t" id="s25w0" style="left:289.14px;top:447px;letter-spacing:-0.046px;">Disabled</div>
<svg class="a" style="left:2px;top:461px" width="16" height="16"><use href="#ic0"/></svg>
<div class="t" id="p26aw0" style="left:19.14px;top:464px;letter-spacing:-0.182px;">Microsoft</div><div class="t" id="p26aw1" style="left:65.69px;top:464px;letter-spacing:0.218px;">network</div><div class="t" id="p26aw2" style="left:109.56px;top:464px;letter-spacing:0.303px;">server:</div>
<div class="t" id="p26bw0" style="left:148.00px;top:464px;letter-spacing:-0.495px;">Amount</div><div class="t" id="p26bw1" style="left:187.05px;top:464px;letter-spacing:-0.974px;">of</div><div class="t" id="p26bw2" style="left:198.52px;top:464px;letter-spacing:-0.401px;">idle</div><div class="t" id="p26bw3" style="left:217.92px;top:464px;letter-spacing:-0.536px;">time</div><div class="t" id="p26bw4" style="left:239.89px;top:464px;letter-spacing:-0.155px;">requir</div><div class="t" id="p26bw5" style="left:267.29px;top:464px;letter-spacing:1.767px;">...</div>
<div class="t" id="s26w0" style="left:289.31px;top:464px;letter-spacing:0.098px;">15</div><div class="t" id="s26w1" style="left:304.61px;top:464px;letter-spacing:-0.131px;">minutes</div>
<div class="chk" style="left:576px;top:0px;width:16px;height:469px;"></div>
<div class="sb" style="left:576px;top:0px;width:16px;height:16px;"></div>
<div class="sb" style="left:576px;top:453px;width:16px;height:16px;"></div>
<div class="sb" style="left:576px;top:75px;width:16px;height:170px;"></div>
<svg class="a" style="left:580px;top:6px" width="7" height="4" viewBox="0 0 7 4" shape-rendering="crispEdges"><path d="M3 0h1v1h-1zM2 1h3v1h-3zM1 2h5v1h-5zM0 3h7v1h-7z"/></svg>
<svg class="a" style="left:580px;top:459px" width="7" height="4" viewBox="0 0 7 4" shape-rendering="crispEdges"><path d="M0 0h7v1h-7zM1 1h5v1h-5zM2 2h3v1h-3zM3 3h1v1h-1z"/></svg></div></div>
<div class="a" style="left:4px;top:550px;width:573px;height:18px;box-sizing:border-box;border:1px solid;border-color:#808080 #fff #fff #808080;"></div>
<div class="a" style="left:579px;top:550px;width:131px;height:18px;box-sizing:border-box;border:1px solid;border-color:#808080 #fff #fff #808080;"></div>
<div class="a" style="left:712px;top:550px;width:83px;height:18px;box-sizing:border-box;border:1px solid;border-color:#808080 #fff #fff #808080;"></div>
<svg class="a" style="left:0;top:0;pointer-events:none" width="801" height="572" viewBox="0 0 801 572"><g font-family="Liberation Sans, sans-serif" font-size="29" fill="none" stroke="#a0a0a0" stroke-opacity="0.9" stroke-width="1" stroke-dasharray="1 1"><text transform="translate(32,128.5) rotate(-12.5)" textLength="272" lengthAdjust="spacingAndGlyphs">www.visualwin.com</text><text transform="translate(329,421) rotate(-11)" textLength="278" lengthAdjust="spacingAndGlyphs">www.visualwin.com</text></g></svg></body></html>
